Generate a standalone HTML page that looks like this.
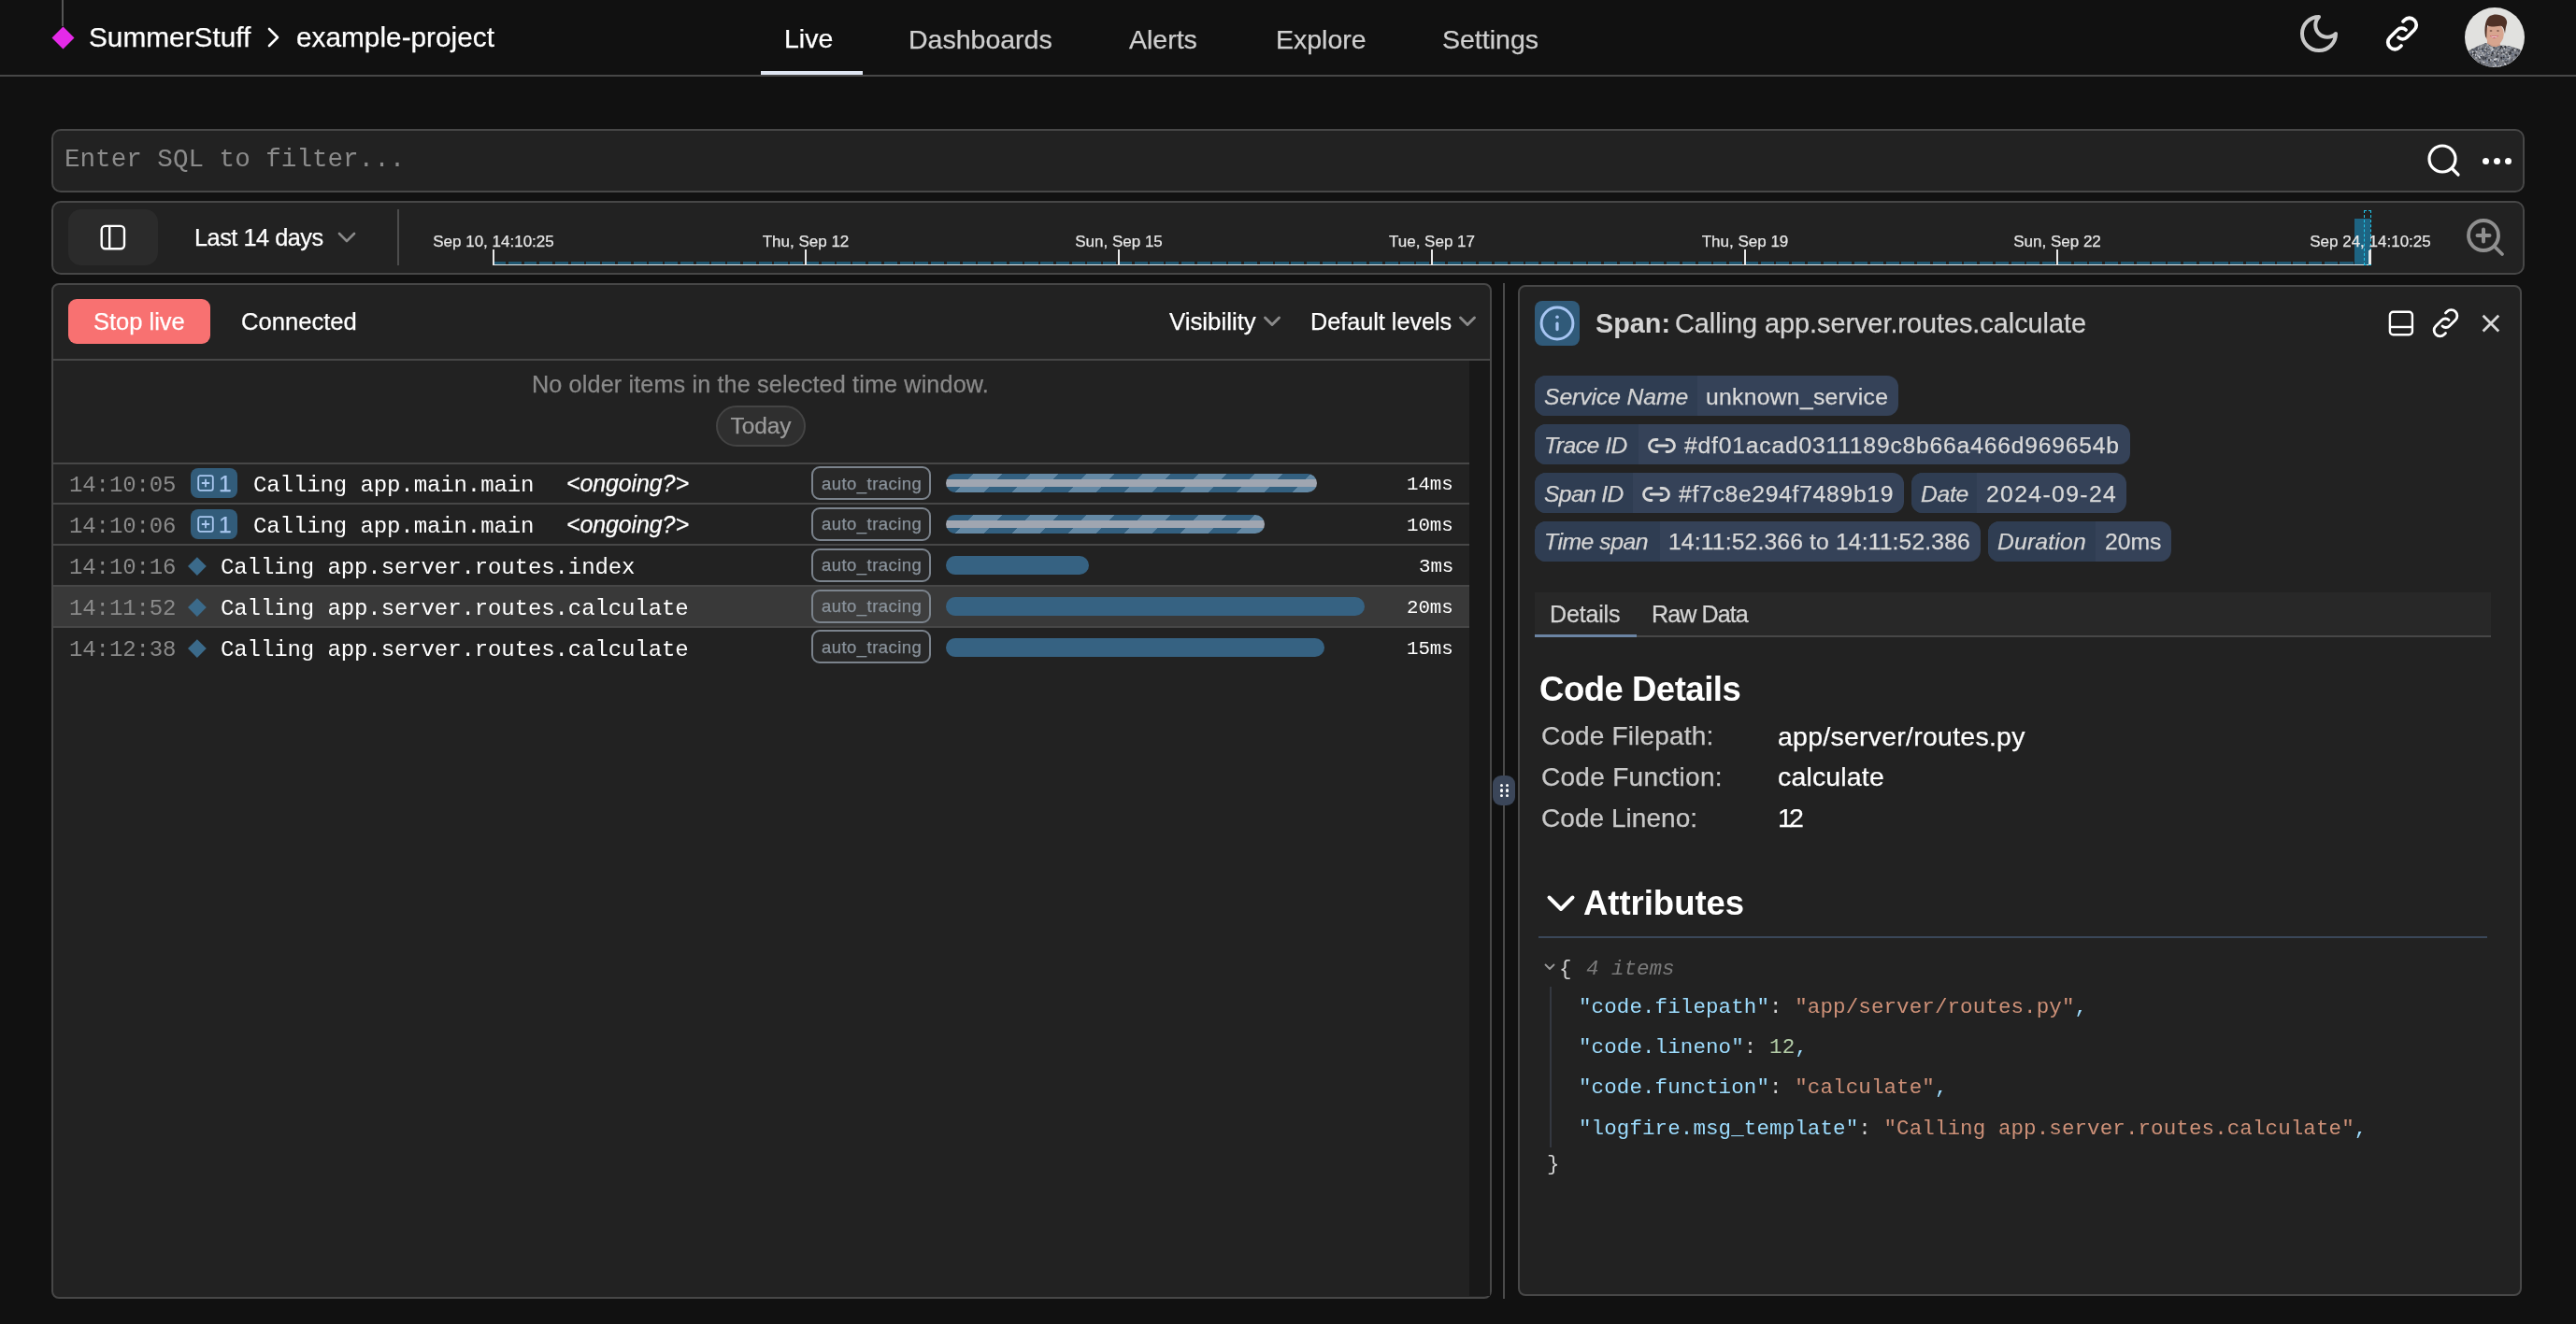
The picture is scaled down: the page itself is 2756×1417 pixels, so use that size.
<!DOCTYPE html>
<html><head><meta charset="utf-8"><title>Logfire - Live</title>
<style>
html,body{margin:0;padding:0;}
body{width:2756px;height:1417px;overflow:hidden;background:#111111;position:relative;font-family:"Liberation Sans", sans-serif;}
.t{position:absolute;white-space:nowrap;line-height:1;will-change:transform;}
.s{-webkit-text-stroke:0.25px currentColor;}
.r{position:absolute;}
</style></head><body>
<div class="r" style="left:66px;top:0px;width:2px;height:28px;background:#555"></div>
<div class="r" style="left:58.5px;top:31.5px;width:17px;height:17px;background:#e52ae8;transform:rotate(45deg)"></div>
<div class="t s" style="left:95px;top:25.07px;font-size:29.8px;color:#fff;">SummerStuff</div>
<svg class="r" style="left:284px;top:28px;" width="18" height="24" viewBox="0 0 18 24" fill="none"><path d="M4 3 L13 12 L4 21" stroke="#fff" stroke-width="2.6" stroke-linecap="round" stroke-linejoin="round"/></svg>
<div class="t s" style="left:317px;top:24.77px;font-size:29.8px;color:#fff;">example-project</div>
<div class="t s" style="left:839px;top:26.87px;font-size:28.5px;color:#fff;">Live</div>
<div class="r" style="left:814px;top:76px;width:109px;height:4px;background:#dfe6f2"></div>
<div class="t s" style="left:972px;top:27.67px;font-size:28.5px;color:#cfcfcf;">Dashboards</div>
<div class="t s" style="left:1208px;top:27.67px;font-size:28.5px;color:#cfcfcf;">Alerts</div>
<div class="t s" style="left:1365px;top:27.67px;font-size:28.5px;color:#cfcfcf;">Explore</div>
<div class="t s" style="left:1543px;top:27.67px;font-size:28.5px;color:#cfcfcf;">Settings</div>
<div class="r" style="left:0px;top:80px;width:2756px;height:2px;background:#474747"></div>
<svg class="r" style="left:2456.8px;top:11.9px;" width="48" height="48" viewBox="0 0 24 24" fill="none"><path d="M12 3a6 6 0 0 0 9 9 9 9 0 1 1-9-9Z" stroke="#c8c8c8" stroke-width="2" stroke-linejoin="round"/></svg>
<svg class="r" style="left:2548px;top:14px;" width="44" height="44" viewBox="0 0 44 44" fill="none"><path d="M18 26 C20.5 28.5 24.5 28.5 27 26 L35 18 C38 15 38 10.5 35 7.5 C32 4.5 27.5 4.5 24.5 7.5 L23 9" stroke="#fff" stroke-width="3.8" stroke-linecap="round"/><path d="M26 18 C23.5 15.5 19.5 15.5 17 18 L9 26 C6 29 6 33.5 9 36.5 C12 39.5 16.5 39.5 19.5 36.5 L21 35" stroke="#fff" stroke-width="3.8" stroke-linecap="round"/></svg>
<svg class="r" style="left:2637px;top:8px" width="64" height="64" viewBox="0 0 64 64">
<defs><clipPath id="av"><circle cx="32" cy="32" r="32"/></clipPath>
<clipPath id="shirt"><path d="M4 47 C9 43 17 40 23 38 C27 41 33 44 37 41 C41 40 50 41 59 45 L64 64 L0 64 Z"/></clipPath></defs>
<g clip-path="url(#av)"><rect width="64" height="64" fill="#e1e1df"/>
<path d="M24 33 L37 33 L38 41 C34 44 28 44 24 40 Z" fill="#cf9d88"/>
<ellipse cx="32" cy="28.5" rx="9.8" ry="12" fill="#d7a58f"/>
<path d="M22 31 C20.5 22 22 12 27 9 C31 6.5 38 7 42 10 C45 12.5 46 16 44.5 19 C43.8 21 43.5 24 43 28 C42.3 24 41.5 21.5 39.5 20 C37 19 33 20.5 29 20.5 C26.5 20.5 25 19.5 24.2 19 C23.7 22.5 23.3 27 23.3 33 Z" fill="#4f3126"/>
<path d="M26.8 30 Q31.5 35.5 36.2 30 Q31.5 31.5 26.8 30 Z" fill="#c8385a"/><path d="M28 30.6 Q31.5 31.8 35 30.6 L34.5 31.6 Q31.5 32.6 28.5 31.6 Z" fill="#f1e6e6"/><ellipse cx="28" cy="25" rx="1.4" ry="0.7" fill="#6d4b3e"/><ellipse cx="35.5" cy="25" rx="1.4" ry="0.7" fill="#6d4b3e"/>
<g clip-path="url(#shirt)"><rect x="0" y="36" width="64" height="28" fill="#7a7c82"/><rect x="21.0" y="40.4" width="1.0" height="1.0" fill="#2e3036"/><rect x="34.8" y="46.6" width="1.9" height="1.9" fill="#2e3036"/><rect x="14.0" y="38.5" width="1.0" height="1.0" fill="#5a6170"/><rect x="5.9" y="48.3" width="1.9" height="1.9" fill="#45484f"/><rect x="41.0" y="52.9" width="1.5" height="1.5" fill="#2e3036"/><rect x="25.8" y="64.3" width="1.5" height="1.5" fill="#2e3036"/><rect x="8.7" y="48.2" width="1.5" height="1.5" fill="#45484f"/><rect x="36.4" y="55.8" width="1.5" height="1.5" fill="#45484f"/><rect x="41.5" y="46.8" width="1.5" height="1.5" fill="#45484f"/><rect x="40.2" y="50.4" width="1.8" height="1.8" fill="#5a6170"/><rect x="30.3" y="62.8" width="1.2" height="1.2" fill="#d5d6da"/><rect x="51.6" y="56.3" width="1.0" height="1.0" fill="#8e9198"/><rect x="19.5" y="50.4" width="1.7" height="1.7" fill="#d5d6da"/><rect x="18.7" y="64.4" width="1.5" height="1.5" fill="#45484f"/><rect x="10.7" y="45.9" width="1.4" height="1.4" fill="#7d8595"/><rect x="62.5" y="38.3" width="1.3" height="1.3" fill="#d5d6da"/><rect x="22.8" y="50.4" width="1.0" height="1.0" fill="#7d8595"/><rect x="6.1" y="43.8" width="1.0" height="1.0" fill="#45484f"/><rect x="45.6" y="54.8" width="1.2" height="1.2" fill="#7d8595"/><rect x="25.1" y="55.4" width="1.9" height="1.9" fill="#2e3036"/><rect x="23.1" y="53.7" width="1.0" height="1.0" fill="#7d8595"/><rect x="49.9" y="39.8" width="1.3" height="1.3" fill="#8e9198"/><rect x="59.6" y="50.4" width="1.4" height="1.4" fill="#6b6e75"/><rect x="35.7" y="61.6" width="1.9" height="1.9" fill="#5a6170"/><rect x="18.1" y="48.0" width="1.7" height="1.7" fill="#d5d6da"/><rect x="24.7" y="42.7" width="1.1" height="1.1" fill="#45484f"/><rect x="15.1" y="42.8" width="1.8" height="1.8" fill="#7d8595"/><rect x="11.9" y="44.2" width="1.4" height="1.4" fill="#6b6e75"/><rect x="24.0" y="52.4" width="1.7" height="1.7" fill="#6b6e75"/><rect x="33.5" y="53.9" width="1.4" height="1.4" fill="#2e3036"/><rect x="56.6" y="63.6" width="1.3" height="1.3" fill="#5a6170"/><rect x="25.6" y="50.0" width="1.0" height="1.0" fill="#5a6170"/><rect x="4.4" y="42.1" width="1.0" height="1.0" fill="#6b6e75"/><rect x="39.0" y="39.0" width="1.5" height="1.5" fill="#6b6e75"/><rect x="61.7" y="53.8" width="1.9" height="1.9" fill="#45484f"/><rect x="39.9" y="40.3" width="2.0" height="2.0" fill="#b5b7bc"/><rect x="39.1" y="49.8" width="1.8" height="1.8" fill="#45484f"/><rect x="64.6" y="49.5" width="1.2" height="1.2" fill="#7d8595"/><rect x="9.4" y="57.7" width="1.4" height="1.4" fill="#b5b7bc"/><rect x="45.0" y="51.0" width="1.9" height="1.9" fill="#8e9198"/><rect x="34.3" y="40.3" width="1.7" height="1.7" fill="#2e3036"/><rect x="19.4" y="54.6" width="1.7" height="1.7" fill="#45484f"/><rect x="17.0" y="46.6" width="1.3" height="1.3" fill="#6b6e75"/><rect x="14.5" y="51.7" width="1.6" height="1.6" fill="#d5d6da"/><rect x="39.9" y="58.9" width="1.8" height="1.8" fill="#8e9198"/><rect x="53.2" y="57.5" width="1.1" height="1.1" fill="#8e9198"/><rect x="32.0" y="57.2" width="1.8" height="1.8" fill="#2e3036"/><rect x="30.7" y="41.6" width="1.4" height="1.4" fill="#d5d6da"/><rect x="60.9" y="64.7" width="1.0" height="1.0" fill="#d5d6da"/><rect x="6.6" y="49.6" width="1.1" height="1.1" fill="#d5d6da"/><rect x="40.6" y="62.1" width="1.4" height="1.4" fill="#2e3036"/><rect x="42.4" y="59.2" width="1.8" height="1.8" fill="#45484f"/><rect x="7.8" y="47.3" width="1.4" height="1.4" fill="#8e9198"/><rect x="11.6" y="58.9" width="1.0" height="1.0" fill="#d5d6da"/><rect x="61.5" y="56.9" width="1.3" height="1.3" fill="#7d8595"/><rect x="61.5" y="57.0" width="2.0" height="2.0" fill="#6b6e75"/><rect x="1.8" y="53.1" width="1.8" height="1.8" fill="#7d8595"/><rect x="9.5" y="60.0" width="1.6" height="1.6" fill="#7d8595"/><rect x="22.8" y="51.9" width="0.9" height="0.9" fill="#6b6e75"/><rect x="52.0" y="57.1" width="1.5" height="1.5" fill="#45484f"/><rect x="60.7" y="48.6" width="1.8" height="1.8" fill="#8e9198"/><rect x="13.7" y="43.3" width="1.5" height="1.5" fill="#b5b7bc"/><rect x="49.6" y="45.5" width="1.8" height="1.8" fill="#5a6170"/><rect x="4.0" y="57.5" width="1.6" height="1.6" fill="#7d8595"/><rect x="53.0" y="51.0" width="1.5" height="1.5" fill="#6b6e75"/><rect x="34.0" y="36.5" width="1.8" height="1.8" fill="#7d8595"/><rect x="39.6" y="58.5" width="1.1" height="1.1" fill="#6b6e75"/><rect x="30.8" y="57.0" width="1.3" height="1.3" fill="#2e3036"/><rect x="33.7" y="52.1" width="1.9" height="1.9" fill="#45484f"/><rect x="3.7" y="41.5" width="1.7" height="1.7" fill="#2e3036"/><rect x="33.0" y="52.3" width="1.4" height="1.4" fill="#45484f"/><rect x="39.8" y="50.7" width="1.7" height="1.7" fill="#8e9198"/><rect x="29.4" y="51.5" width="1.5" height="1.5" fill="#7d8595"/><rect x="16.1" y="51.2" width="1.9" height="1.9" fill="#b5b7bc"/><rect x="58.0" y="41.9" width="1.1" height="1.1" fill="#7d8595"/><rect x="7.9" y="48.8" width="1.6" height="1.6" fill="#45484f"/><rect x="27.8" y="42.2" width="1.8" height="1.8" fill="#b5b7bc"/><rect x="58.3" y="40.5" width="1.1" height="1.1" fill="#d5d6da"/><rect x="57.4" y="64.1" width="1.7" height="1.7" fill="#8e9198"/><rect x="6.1" y="61.7" width="2.0" height="2.0" fill="#6b6e75"/><rect x="54.1" y="40.7" width="2.0" height="2.0" fill="#5a6170"/><rect x="26.2" y="48.2" width="1.3" height="1.3" fill="#d5d6da"/><rect x="46.9" y="36.6" width="1.4" height="1.4" fill="#7d8595"/><rect x="1.2" y="45.6" width="1.5" height="1.5" fill="#b5b7bc"/><rect x="4.2" y="64.6" width="2.0" height="2.0" fill="#8e9198"/><rect x="6.8" y="43.7" width="1.9" height="1.9" fill="#2e3036"/><rect x="11.8" y="57.9" width="1.8" height="1.8" fill="#5a6170"/><rect x="43.9" y="63.4" width="1.1" height="1.1" fill="#5a6170"/><rect x="59.7" y="52.5" width="1.0" height="1.0" fill="#d5d6da"/><rect x="3.7" y="56.0" width="1.9" height="1.9" fill="#5a6170"/><rect x="17.5" y="36.5" width="1.8" height="1.8" fill="#45484f"/><rect x="5.4" y="60.8" width="1.2" height="1.2" fill="#45484f"/><rect x="7.9" y="36.3" width="1.9" height="1.9" fill="#5a6170"/><rect x="17.4" y="39.7" width="1.9" height="1.9" fill="#8e9198"/><rect x="63.0" y="43.6" width="1.1" height="1.1" fill="#6b6e75"/><rect x="20.3" y="44.8" width="1.2" height="1.2" fill="#8e9198"/><rect x="32.5" y="41.2" width="1.8" height="1.8" fill="#d5d6da"/><rect x="64.6" y="37.1" width="1.7" height="1.7" fill="#2e3036"/><rect x="35.8" y="41.5" width="1.2" height="1.2" fill="#7d8595"/><rect x="29.1" y="55.1" width="1.6" height="1.6" fill="#5a6170"/><rect x="35.5" y="61.8" width="1.7" height="1.7" fill="#b5b7bc"/><rect x="63.9" y="45.9" width="1.3" height="1.3" fill="#6b6e75"/><rect x="22.6" y="37.6" width="0.9" height="0.9" fill="#6b6e75"/><rect x="40.7" y="61.5" width="1.1" height="1.1" fill="#5a6170"/><rect x="5.5" y="60.4" width="1.6" height="1.6" fill="#b5b7bc"/><rect x="45.0" y="37.3" width="1.1" height="1.1" fill="#6b6e75"/><rect x="29.0" y="43.6" width="2.0" height="2.0" fill="#d5d6da"/><rect x="35.6" y="43.1" width="1.1" height="1.1" fill="#b5b7bc"/><rect x="11.9" y="45.7" width="1.4" height="1.4" fill="#45484f"/><rect x="32.7" y="41.8" width="1.0" height="1.0" fill="#2e3036"/><rect x="53.1" y="40.2" width="1.3" height="1.3" fill="#2e3036"/><rect x="19.5" y="54.3" width="1.5" height="1.5" fill="#45484f"/><rect x="34.4" y="57.8" width="1.7" height="1.7" fill="#5a6170"/><rect x="46.8" y="50.3" width="1.7" height="1.7" fill="#b5b7bc"/><rect x="41.8" y="37.3" width="1.7" height="1.7" fill="#5a6170"/><rect x="52.8" y="40.0" width="1.8" height="1.8" fill="#2e3036"/><rect x="38.0" y="61.9" width="1.0" height="1.0" fill="#8e9198"/><rect x="2.7" y="54.5" width="1.3" height="1.3" fill="#45484f"/><rect x="29.3" y="37.5" width="1.6" height="1.6" fill="#2e3036"/><rect x="44.2" y="50.2" width="1.4" height="1.4" fill="#2e3036"/><rect x="4.6" y="63.0" width="1.6" height="1.6" fill="#45484f"/><rect x="4.3" y="57.4" width="1.8" height="1.8" fill="#b5b7bc"/><rect x="55.0" y="42.8" width="1.2" height="1.2" fill="#8e9198"/><rect x="42.2" y="49.3" width="1.0" height="1.0" fill="#5a6170"/><rect x="59.2" y="44.3" width="1.6" height="1.6" fill="#2e3036"/><rect x="41.8" y="38.2" width="1.3" height="1.3" fill="#6b6e75"/><rect x="42.3" y="56.1" width="0.9" height="0.9" fill="#6b6e75"/><rect x="3.9" y="43.8" width="1.7" height="1.7" fill="#45484f"/><rect x="43.9" y="44.4" width="1.4" height="1.4" fill="#b5b7bc"/><rect x="30.3" y="39.4" width="1.2" height="1.2" fill="#8e9198"/><rect x="5.6" y="49.7" width="1.4" height="1.4" fill="#b5b7bc"/><rect x="53.3" y="64.1" width="2.0" height="2.0" fill="#7d8595"/><rect x="25.1" y="62.6" width="1.0" height="1.0" fill="#8e9198"/><rect x="5.9" y="57.7" width="1.9" height="1.9" fill="#b5b7bc"/><rect x="8.6" y="59.8" width="1.9" height="1.9" fill="#b5b7bc"/><rect x="45.7" y="42.7" width="1.3" height="1.3" fill="#7d8595"/><rect x="10.3" y="63.5" width="1.3" height="1.3" fill="#7d8595"/><rect x="47.3" y="48.1" width="1.2" height="1.2" fill="#5a6170"/><rect x="54.6" y="36.1" width="1.8" height="1.8" fill="#d5d6da"/><rect x="7.8" y="62.9" width="1.9" height="1.9" fill="#2e3036"/><rect x="18.8" y="46.8" width="1.3" height="1.3" fill="#5a6170"/><rect x="56.5" y="38.2" width="1.7" height="1.7" fill="#5a6170"/><rect x="55.5" y="44.1" width="1.8" height="1.8" fill="#2e3036"/><rect x="18.6" y="63.1" width="2.0" height="2.0" fill="#8e9198"/><rect x="28.4" y="45.2" width="1.8" height="1.8" fill="#d5d6da"/><rect x="27.8" y="36.8" width="1.9" height="1.9" fill="#5a6170"/><rect x="61.1" y="51.9" width="1.0" height="1.0" fill="#45484f"/><rect x="47.6" y="49.1" width="1.6" height="1.6" fill="#6b6e75"/><rect x="18.6" y="37.4" width="1.1" height="1.1" fill="#6b6e75"/><rect x="27.0" y="44.2" width="1.7" height="1.7" fill="#b5b7bc"/><rect x="63.5" y="43.5" width="1.2" height="1.2" fill="#8e9198"/><rect x="36.2" y="47.4" width="1.6" height="1.6" fill="#6b6e75"/><rect x="4.9" y="50.5" width="1.5" height="1.5" fill="#7d8595"/><rect x="29.4" y="45.7" width="1.4" height="1.4" fill="#7d8595"/><rect x="35.6" y="43.1" width="1.3" height="1.3" fill="#6b6e75"/><rect x="5.9" y="42.9" width="1.8" height="1.8" fill="#b5b7bc"/><rect x="13.1" y="36.6" width="1.3" height="1.3" fill="#5a6170"/><rect x="48.5" y="42.1" width="1.3" height="1.3" fill="#b5b7bc"/><rect x="4.0" y="44.0" width="1.0" height="1.0" fill="#d5d6da"/><rect x="32.7" y="54.3" width="1.0" height="1.0" fill="#8e9198"/><rect x="58.3" y="47.2" width="1.4" height="1.4" fill="#7d8595"/><rect x="20.3" y="59.6" width="1.0" height="1.0" fill="#2e3036"/><rect x="27.6" y="58.1" width="2.0" height="2.0" fill="#7d8595"/><rect x="31.8" y="38.1" width="2.0" height="2.0" fill="#7d8595"/><rect x="16.2" y="39.2" width="1.1" height="1.1" fill="#6b6e75"/><rect x="63.2" y="39.2" width="1.0" height="1.0" fill="#7d8595"/><rect x="50.5" y="36.0" width="1.2" height="1.2" fill="#6b6e75"/><rect x="59.8" y="54.7" width="2.0" height="2.0" fill="#b5b7bc"/><rect x="40.7" y="51.3" width="1.7" height="1.7" fill="#5a6170"/><rect x="7.3" y="38.0" width="1.3" height="1.3" fill="#8e9198"/><rect x="14.5" y="53.4" width="1.5" height="1.5" fill="#2e3036"/><rect x="64.8" y="44.1" width="1.6" height="1.6" fill="#d5d6da"/><rect x="57.4" y="49.8" width="1.5" height="1.5" fill="#8e9198"/><rect x="1.9" y="47.9" width="1.0" height="1.0" fill="#b5b7bc"/><rect x="12.6" y="61.7" width="1.0" height="1.0" fill="#5a6170"/><rect x="14.8" y="48.3" width="1.1" height="1.1" fill="#d5d6da"/><rect x="2.2" y="45.8" width="1.3" height="1.3" fill="#5a6170"/><rect x="25.8" y="36.2" width="1.7" height="1.7" fill="#b5b7bc"/><rect x="32.8" y="42.0" width="1.2" height="1.2" fill="#8e9198"/><rect x="53.3" y="42.7" width="1.2" height="1.2" fill="#8e9198"/><rect x="57.8" y="39.2" width="1.6" height="1.6" fill="#7d8595"/><rect x="58.3" y="50.1" width="1.9" height="1.9" fill="#2e3036"/><rect x="9.5" y="47.4" width="0.9" height="0.9" fill="#8e9198"/><rect x="38.7" y="48.0" width="1.1" height="1.1" fill="#2e3036"/><rect x="29.2" y="56.6" width="1.7" height="1.7" fill="#d5d6da"/><rect x="64.8" y="63.0" width="1.1" height="1.1" fill="#d5d6da"/><rect x="42.4" y="51.2" width="0.9" height="0.9" fill="#7d8595"/><rect x="43.2" y="47.0" width="2.0" height="2.0" fill="#d5d6da"/><rect x="28.8" y="39.2" width="1.2" height="1.2" fill="#45484f"/><rect x="22.8" y="63.7" width="1.5" height="1.5" fill="#45484f"/><rect x="49.3" y="47.0" width="1.8" height="1.8" fill="#b5b7bc"/><rect x="28.1" y="37.4" width="1.1" height="1.1" fill="#7d8595"/><rect x="35.2" y="48.9" width="1.3" height="1.3" fill="#d5d6da"/><rect x="58.3" y="36.9" width="1.2" height="1.2" fill="#5a6170"/><rect x="40.7" y="47.7" width="0.9" height="0.9" fill="#5a6170"/><rect x="4.1" y="62.7" width="1.1" height="1.1" fill="#b5b7bc"/><rect x="4.1" y="53.6" width="1.2" height="1.2" fill="#d5d6da"/><rect x="62.2" y="53.9" width="1.7" height="1.7" fill="#b5b7bc"/><rect x="44.8" y="62.8" width="0.9" height="0.9" fill="#b5b7bc"/><rect x="49.1" y="62.6" width="0.9" height="0.9" fill="#45484f"/><rect x="15.2" y="49.8" width="1.9" height="1.9" fill="#7d8595"/><rect x="25.1" y="43.3" width="1.8" height="1.8" fill="#5a6170"/><rect x="8.6" y="50.4" width="1.8" height="1.8" fill="#2e3036"/><rect x="48.0" y="59.9" width="1.6" height="1.6" fill="#6b6e75"/><rect x="21.3" y="45.3" width="1.8" height="1.8" fill="#d5d6da"/><rect x="38.7" y="50.8" width="1.7" height="1.7" fill="#5a6170"/><rect x="16.1" y="37.9" width="1.4" height="1.4" fill="#2e3036"/><rect x="35.4" y="40.7" width="1.9" height="1.9" fill="#5a6170"/><rect x="64.2" y="43.7" width="1.1" height="1.1" fill="#45484f"/><rect x="27.4" y="64.7" width="1.1" height="1.1" fill="#7d8595"/><rect x="8.6" y="49.4" width="1.7" height="1.7" fill="#8e9198"/><rect x="55.1" y="55.3" width="1.8" height="1.8" fill="#45484f"/><rect x="19.1" y="44.1" width="1.3" height="1.3" fill="#b5b7bc"/><rect x="48.0" y="41.8" width="1.1" height="1.1" fill="#8e9198"/><rect x="15.3" y="44.2" width="1.3" height="1.3" fill="#8e9198"/><rect x="25.7" y="64.8" width="1.6" height="1.6" fill="#8e9198"/><rect x="6.5" y="49.5" width="1.0" height="1.0" fill="#2e3036"/><rect x="30.9" y="59.8" width="1.9" height="1.9" fill="#7d8595"/><rect x="2.6" y="44.5" width="1.0" height="1.0" fill="#45484f"/><rect x="39.0" y="60.0" width="1.9" height="1.9" fill="#8e9198"/><rect x="24.2" y="61.1" width="1.6" height="1.6" fill="#7d8595"/><rect x="50.4" y="55.3" width="1.0" height="1.0" fill="#2e3036"/><rect x="38.7" y="54.0" width="0.9" height="0.9" fill="#8e9198"/><rect x="22.1" y="37.3" width="0.9" height="0.9" fill="#b5b7bc"/><rect x="47.6" y="62.5" width="1.8" height="1.8" fill="#2e3036"/><rect x="26.6" y="46.8" width="1.0" height="1.0" fill="#b5b7bc"/><rect x="2.0" y="50.4" width="1.0" height="1.0" fill="#7d8595"/><rect x="6.6" y="47.5" width="1.6" height="1.6" fill="#6b6e75"/><rect x="5.9" y="40.7" width="1.4" height="1.4" fill="#b5b7bc"/><rect x="18.4" y="44.9" width="1.2" height="1.2" fill="#2e3036"/><rect x="36.8" y="46.4" width="0.9" height="0.9" fill="#5a6170"/><rect x="49.8" y="59.3" width="1.3" height="1.3" fill="#8e9198"/><rect x="26.3" y="63.3" width="1.9" height="1.9" fill="#5a6170"/><rect x="27.5" y="59.8" width="1.5" height="1.5" fill="#5a6170"/><rect x="23.7" y="58.4" width="0.9" height="0.9" fill="#6b6e75"/><rect x="35.9" y="54.6" width="1.0" height="1.0" fill="#5a6170"/><rect x="40.4" y="46.8" width="1.1" height="1.1" fill="#6b6e75"/><rect x="18.4" y="51.1" width="1.0" height="1.0" fill="#45484f"/><rect x="31.9" y="59.3" width="1.2" height="1.2" fill="#8e9198"/><rect x="54.4" y="37.3" width="1.2" height="1.2" fill="#7d8595"/><rect x="39.5" y="54.5" width="1.9" height="1.9" fill="#45484f"/><rect x="40.3" y="59.9" width="1.6" height="1.6" fill="#6b6e75"/><rect x="55.7" y="54.0" width="1.8" height="1.8" fill="#8e9198"/><rect x="11.9" y="42.3" width="1.9" height="1.9" fill="#5a6170"/><rect x="10.2" y="46.4" width="1.2" height="1.2" fill="#6b6e75"/><rect x="47.1" y="62.0" width="1.9" height="1.9" fill="#2e3036"/><rect x="54.8" y="55.5" width="1.0" height="1.0" fill="#d5d6da"/><rect x="39.0" y="52.0" width="1.6" height="1.6" fill="#b5b7bc"/><rect x="20.0" y="43.2" width="1.6" height="1.6" fill="#5a6170"/><rect x="29.0" y="48.7" width="0.9" height="0.9" fill="#2e3036"/><rect x="64.1" y="49.5" width="1.7" height="1.7" fill="#7d8595"/><rect x="50.7" y="49.3" width="1.8" height="1.8" fill="#6b6e75"/><rect x="26.0" y="37.9" width="1.4" height="1.4" fill="#d5d6da"/><rect x="6.0" y="48.8" width="0.9" height="0.9" fill="#2e3036"/><rect x="8.5" y="62.7" width="1.8" height="1.8" fill="#d5d6da"/><rect x="33.2" y="37.6" width="1.6" height="1.6" fill="#5a6170"/><rect x="51.0" y="36.7" width="2.0" height="2.0" fill="#45484f"/><rect x="47.6" y="59.6" width="1.0" height="1.0" fill="#8e9198"/><rect x="57.6" y="44.3" width="1.7" height="1.7" fill="#6b6e75"/><rect x="46.9" y="42.4" width="1.6" height="1.6" fill="#d5d6da"/><rect x="16.4" y="45.4" width="1.9" height="1.9" fill="#b5b7bc"/><rect x="29.7" y="43.4" width="1.1" height="1.1" fill="#7d8595"/><rect x="17.1" y="50.7" width="1.3" height="1.3" fill="#d5d6da"/><rect x="12.9" y="47.7" width="1.6" height="1.6" fill="#b5b7bc"/><rect x="58.2" y="40.9" width="1.0" height="1.0" fill="#b5b7bc"/><rect x="34.5" y="54.5" width="2.0" height="2.0" fill="#d5d6da"/><rect x="29.4" y="51.1" width="1.2" height="1.2" fill="#45484f"/><rect x="34.8" y="60.8" width="1.2" height="1.2" fill="#d5d6da"/><rect x="64.4" y="52.7" width="1.3" height="1.3" fill="#d5d6da"/><rect x="5.3" y="42.7" width="1.2" height="1.2" fill="#2e3036"/><rect x="33.5" y="45.0" width="1.7" height="1.7" fill="#d5d6da"/><rect x="48.6" y="42.4" width="1.6" height="1.6" fill="#b5b7bc"/><rect x="28.1" y="50.9" width="1.0" height="1.0" fill="#2e3036"/><rect x="14.8" y="54.9" width="1.0" height="1.0" fill="#2e3036"/><rect x="36.9" y="44.8" width="1.5" height="1.5" fill="#d5d6da"/><rect x="26.9" y="44.7" width="1.1" height="1.1" fill="#6b6e75"/><rect x="40.6" y="49.8" width="0.9" height="0.9" fill="#6b6e75"/><rect x="52.1" y="56.5" width="1.0" height="1.0" fill="#7d8595"/><rect x="41.5" y="61.3" width="1.3" height="1.3" fill="#b5b7bc"/><rect x="17.2" y="36.3" width="1.6" height="1.6" fill="#d5d6da"/><rect x="37.6" y="53.5" width="1.2" height="1.2" fill="#7d8595"/><rect x="58.7" y="37.3" width="1.3" height="1.3" fill="#2e3036"/><rect x="15.4" y="37.7" width="0.9" height="0.9" fill="#45484f"/><rect x="35.8" y="63.3" width="1.4" height="1.4" fill="#6b6e75"/><rect x="33.7" y="54.6" width="1.8" height="1.8" fill="#5a6170"/><rect x="11.4" y="45.0" width="1.6" height="1.6" fill="#b5b7bc"/><rect x="64.6" y="57.0" width="1.7" height="1.7" fill="#7d8595"/><rect x="0.4" y="60.5" width="1.0" height="1.0" fill="#7d8595"/><rect x="42.6" y="41.1" width="1.2" height="1.2" fill="#45484f"/><rect x="41.9" y="39.6" width="1.7" height="1.7" fill="#b5b7bc"/><rect x="17.3" y="52.1" width="1.7" height="1.7" fill="#5a6170"/><rect x="59.6" y="64.2" width="1.6" height="1.6" fill="#b5b7bc"/><rect x="62.7" y="42.3" width="1.1" height="1.1" fill="#2e3036"/><rect x="58.8" y="60.4" width="1.9" height="1.9" fill="#8e9198"/><rect x="48.5" y="45.5" width="1.3" height="1.3" fill="#5a6170"/><rect x="15.5" y="62.3" width="1.4" height="1.4" fill="#7d8595"/><rect x="34.5" y="36.2" width="1.4" height="1.4" fill="#2e3036"/><rect x="47.1" y="52.5" width="1.8" height="1.8" fill="#b5b7bc"/><rect x="25.5" y="53.0" width="1.1" height="1.1" fill="#6b6e75"/><rect x="1.7" y="39.1" width="1.3" height="1.3" fill="#6b6e75"/><rect x="9.2" y="36.8" width="1.1" height="1.1" fill="#2e3036"/><rect x="41.8" y="37.2" width="1.7" height="1.7" fill="#45484f"/><rect x="4.3" y="53.1" width="1.1" height="1.1" fill="#d5d6da"/><rect x="62.0" y="51.5" width="1.9" height="1.9" fill="#45484f"/><rect x="49.1" y="56.6" width="1.0" height="1.0" fill="#5a6170"/><rect x="13.4" y="39.2" width="1.9" height="1.9" fill="#2e3036"/><rect x="59.2" y="57.9" width="1.8" height="1.8" fill="#45484f"/><rect x="41.0" y="44.3" width="1.0" height="1.0" fill="#45484f"/><rect x="51.5" y="54.7" width="1.3" height="1.3" fill="#b5b7bc"/><rect x="27.5" y="36.6" width="1.9" height="1.9" fill="#b5b7bc"/><rect x="3.1" y="58.0" width="1.7" height="1.7" fill="#d5d6da"/><rect x="39.1" y="49.8" width="1.6" height="1.6" fill="#b5b7bc"/><rect x="2.0" y="48.0" width="1.5" height="1.5" fill="#5a6170"/><rect x="6.4" y="49.6" width="1.5" height="1.5" fill="#2e3036"/><rect x="14.1" y="61.0" width="1.5" height="1.5" fill="#45484f"/><rect x="18.7" y="48.6" width="1.2" height="1.2" fill="#8e9198"/><rect x="48.8" y="37.6" width="1.4" height="1.4" fill="#d5d6da"/><rect x="31.9" y="59.1" width="2.0" height="2.0" fill="#6b6e75"/><rect x="38.5" y="63.8" width="1.5" height="1.5" fill="#b5b7bc"/><rect x="10.3" y="59.6" width="1.4" height="1.4" fill="#8e9198"/><rect x="7.1" y="54.5" width="1.4" height="1.4" fill="#45484f"/><rect x="64.4" y="52.3" width="1.6" height="1.6" fill="#45484f"/><rect x="23.1" y="47.6" width="1.9" height="1.9" fill="#5a6170"/><rect x="48.4" y="48.2" width="1.3" height="1.3" fill="#2e3036"/><rect x="19.7" y="48.4" width="1.3" height="1.3" fill="#6b6e75"/><rect x="57.5" y="42.8" width="1.0" height="1.0" fill="#7d8595"/><rect x="38.6" y="56.0" width="1.3" height="1.3" fill="#2e3036"/><rect x="21.2" y="40.5" width="1.6" height="1.6" fill="#7d8595"/><rect x="48.2" y="40.9" width="1.7" height="1.7" fill="#7d8595"/><rect x="16.7" y="42.7" width="1.4" height="1.4" fill="#d5d6da"/><rect x="57.5" y="42.9" width="1.2" height="1.2" fill="#8e9198"/><rect x="49.1" y="60.0" width="1.7" height="1.7" fill="#6b6e75"/><rect x="63.4" y="57.0" width="1.1" height="1.1" fill="#d5d6da"/><rect x="21.3" y="41.5" width="1.1" height="1.1" fill="#45484f"/><rect x="42.8" y="41.7" width="2.0" height="2.0" fill="#6b6e75"/><rect x="51.7" y="57.3" width="1.2" height="1.2" fill="#5a6170"/><rect x="7.1" y="62.4" width="1.1" height="1.1" fill="#b5b7bc"/><rect x="25.2" y="37.0" width="1.8" height="1.8" fill="#5a6170"/><rect x="28.4" y="42.5" width="1.4" height="1.4" fill="#b5b7bc"/><rect x="9.2" y="53.5" width="0.9" height="0.9" fill="#5a6170"/><rect x="15.7" y="60.7" width="1.8" height="1.8" fill="#5a6170"/><rect x="43.4" y="54.9" width="1.6" height="1.6" fill="#8e9198"/><rect x="41.7" y="49.2" width="1.2" height="1.2" fill="#d5d6da"/><rect x="45.5" y="61.9" width="1.8" height="1.8" fill="#8e9198"/><rect x="46.4" y="54.3" width="1.8" height="1.8" fill="#b5b7bc"/><rect x="31.4" y="36.6" width="1.5" height="1.5" fill="#5a6170"/><rect x="43.0" y="61.3" width="1.8" height="1.8" fill="#d5d6da"/><rect x="25.3" y="50.2" width="0.9" height="0.9" fill="#45484f"/><rect x="35.3" y="40.7" width="1.5" height="1.5" fill="#8e9198"/><rect x="6.6" y="52.7" width="1.7" height="1.7" fill="#8e9198"/><rect x="33.3" y="54.5" width="1.5" height="1.5" fill="#d5d6da"/><rect x="26.7" y="63.5" width="2.0" height="2.0" fill="#8e9198"/><rect x="11.9" y="50.9" width="1.7" height="1.7" fill="#45484f"/><rect x="39.9" y="54.5" width="1.2" height="1.2" fill="#b5b7bc"/><rect x="26.0" y="36.4" width="1.9" height="1.9" fill="#5a6170"/><rect x="40.9" y="55.6" width="1.0" height="1.0" fill="#b5b7bc"/><rect x="19.7" y="47.6" width="2.0" height="2.0" fill="#8e9198"/><rect x="62.5" y="49.4" width="1.0" height="1.0" fill="#6b6e75"/><rect x="50.5" y="59.5" width="1.4" height="1.4" fill="#8e9198"/><rect x="36.5" y="42.6" width="1.3" height="1.3" fill="#6b6e75"/><rect x="41.5" y="59.7" width="1.4" height="1.4" fill="#5a6170"/><rect x="19.1" y="51.9" width="1.8" height="1.8" fill="#6b6e75"/><rect x="30.5" y="58.7" width="1.2" height="1.2" fill="#8e9198"/><rect x="24.4" y="43.4" width="1.6" height="1.6" fill="#5a6170"/><rect x="31.3" y="59.4" width="1.3" height="1.3" fill="#b5b7bc"/><rect x="42.5" y="45.3" width="1.4" height="1.4" fill="#7d8595"/><rect x="41.4" y="55.1" width="1.1" height="1.1" fill="#d5d6da"/><rect x="19.7" y="47.2" width="1.8" height="1.8" fill="#45484f"/><rect x="58.9" y="58.7" width="1.5" height="1.5" fill="#6b6e75"/><rect x="22.4" y="52.9" width="1.1" height="1.1" fill="#2e3036"/><rect x="4.7" y="44.5" width="1.5" height="1.5" fill="#45484f"/><rect x="55.5" y="41.4" width="1.3" height="1.3" fill="#7d8595"/><rect x="9.9" y="62.2" width="1.6" height="1.6" fill="#6b6e75"/><rect x="44.7" y="64.3" width="1.6" height="1.6" fill="#45484f"/><rect x="58.1" y="58.9" width="1.1" height="1.1" fill="#b5b7bc"/><rect x="45.0" y="51.4" width="1.6" height="1.6" fill="#7d8595"/><rect x="7.6" y="39.4" width="1.2" height="1.2" fill="#5a6170"/><rect x="9.1" y="50.3" width="1.4" height="1.4" fill="#2e3036"/><rect x="58.9" y="56.3" width="1.4" height="1.4" fill="#8e9198"/><rect x="35.1" y="61.0" width="1.1" height="1.1" fill="#2e3036"/><rect x="20.8" y="56.2" width="1.6" height="1.6" fill="#7d8595"/><rect x="54.6" y="46.9" width="2.0" height="2.0" fill="#5a6170"/><rect x="43.9" y="41.2" width="1.6" height="1.6" fill="#d5d6da"/><rect x="1.9" y="53.7" width="1.8" height="1.8" fill="#d5d6da"/><rect x="6.1" y="50.0" width="0.9" height="0.9" fill="#6b6e75"/><rect x="46.7" y="54.1" width="1.0" height="1.0" fill="#d5d6da"/><rect x="42.8" y="45.9" width="1.2" height="1.2" fill="#8e9198"/><rect x="22.2" y="43.3" width="1.8" height="1.8" fill="#2e3036"/><rect x="19.0" y="60.0" width="1.3" height="1.3" fill="#5a6170"/><rect x="64.0" y="61.3" width="2.0" height="2.0" fill="#d5d6da"/><rect x="42.5" y="59.0" width="1.1" height="1.1" fill="#d5d6da"/><rect x="46.4" y="39.7" width="1.8" height="1.8" fill="#45484f"/><rect x="2.6" y="57.0" width="1.5" height="1.5" fill="#5a6170"/><rect x="3.2" y="44.7" width="1.0" height="1.0" fill="#2e3036"/><rect x="53.4" y="49.8" width="1.8" height="1.8" fill="#2e3036"/><rect x="59.1" y="53.7" width="1.6" height="1.6" fill="#6b6e75"/><rect x="45.3" y="53.3" width="1.1" height="1.1" fill="#45484f"/><rect x="43.4" y="49.3" width="1.0" height="1.0" fill="#6b6e75"/><rect x="11.8" y="37.1" width="1.9" height="1.9" fill="#45484f"/><rect x="42.6" y="46.7" width="1.8" height="1.8" fill="#6b6e75"/><rect x="36.5" y="43.5" width="1.1" height="1.1" fill="#b5b7bc"/><rect x="2.2" y="36.6" width="1.4" height="1.4" fill="#2e3036"/><rect x="33.9" y="59.9" width="1.5" height="1.5" fill="#5a6170"/><rect x="59.7" y="48.9" width="1.6" height="1.6" fill="#2e3036"/><rect x="38.6" y="64.8" width="1.4" height="1.4" fill="#6b6e75"/><rect x="26.8" y="39.0" width="1.1" height="1.1" fill="#7d8595"/><rect x="9.9" y="36.5" width="0.9" height="0.9" fill="#2e3036"/><rect x="43.5" y="64.6" width="1.1" height="1.1" fill="#45484f"/><rect x="7.9" y="49.7" width="1.7" height="1.7" fill="#b5b7bc"/><rect x="15.7" y="57.3" width="1.9" height="1.9" fill="#6b6e75"/><rect x="23.8" y="57.7" width="1.7" height="1.7" fill="#6b6e75"/><rect x="5.5" y="54.2" width="1.4" height="1.4" fill="#7d8595"/><rect x="60.6" y="43.4" width="1.7" height="1.7" fill="#2e3036"/><rect x="0.7" y="36.4" width="1.3" height="1.3" fill="#45484f"/><rect x="20.3" y="53.4" width="1.6" height="1.6" fill="#7d8595"/><rect x="20.6" y="63.5" width="1.4" height="1.4" fill="#7d8595"/><rect x="10.8" y="64.0" width="1.3" height="1.3" fill="#45484f"/><rect x="41.9" y="54.3" width="1.4" height="1.4" fill="#5a6170"/><rect x="50.6" y="49.1" width="1.8" height="1.8" fill="#b5b7bc"/><rect x="36.8" y="44.5" width="1.6" height="1.6" fill="#2e3036"/><rect x="42.3" y="59.3" width="1.9" height="1.9" fill="#d5d6da"/><rect x="47.2" y="36.4" width="1.6" height="1.6" fill="#6b6e75"/><rect x="20.1" y="48.4" width="1.3" height="1.3" fill="#8e9198"/><rect x="44.5" y="53.5" width="1.8" height="1.8" fill="#8e9198"/><rect x="18.4" y="36.0" width="1.2" height="1.2" fill="#b5b7bc"/><rect x="10.2" y="62.7" width="1.2" height="1.2" fill="#2e3036"/><rect x="9.1" y="61.8" width="1.2" height="1.2" fill="#6b6e75"/><rect x="55.3" y="59.4" width="1.3" height="1.3" fill="#7d8595"/><rect x="5.5" y="52.1" width="1.1" height="1.1" fill="#5a6170"/><rect x="48.8" y="63.0" width="1.2" height="1.2" fill="#8e9198"/><rect x="3.7" y="47.5" width="1.9" height="1.9" fill="#8e9198"/><rect x="38.1" y="36.3" width="1.4" height="1.4" fill="#5a6170"/><rect x="5.7" y="59.4" width="1.2" height="1.2" fill="#45484f"/><rect x="37.7" y="62.0" width="1.4" height="1.4" fill="#d5d6da"/><rect x="38.3" y="41.5" width="1.0" height="1.0" fill="#8e9198"/><rect x="52.4" y="44.4" width="1.3" height="1.3" fill="#d5d6da"/><rect x="33.6" y="40.3" width="1.9" height="1.9" fill="#2e3036"/><rect x="32.1" y="61.1" width="1.6" height="1.6" fill="#d5d6da"/><rect x="51.2" y="40.5" width="1.3" height="1.3" fill="#2e3036"/><rect x="33.8" y="36.6" width="1.1" height="1.1" fill="#2e3036"/><rect x="56.6" y="52.4" width="1.2" height="1.2" fill="#8e9198"/><rect x="50.6" y="48.4" width="1.7" height="1.7" fill="#7d8595"/><rect x="53.2" y="63.9" width="1.8" height="1.8" fill="#b5b7bc"/><rect x="22.0" y="64.8" width="1.0" height="1.0" fill="#5a6170"/><rect x="3.3" y="52.2" width="1.4" height="1.4" fill="#7d8595"/><rect x="55.0" y="61.9" width="1.9" height="1.9" fill="#5a6170"/><rect x="45.9" y="38.6" width="1.5" height="1.5" fill="#d5d6da"/><rect x="41.6" y="63.7" width="1.1" height="1.1" fill="#5a6170"/><rect x="55.2" y="46.8" width="2.0" height="2.0" fill="#8e9198"/><rect x="14.4" y="37.1" width="1.9" height="1.9" fill="#b5b7bc"/><rect x="3.9" y="52.0" width="1.8" height="1.8" fill="#2e3036"/><rect x="3.1" y="58.8" width="1.0" height="1.0" fill="#7d8595"/><rect x="9.4" y="57.9" width="1.6" height="1.6" fill="#8e9198"/><rect x="19.4" y="53.2" width="1.4" height="1.4" fill="#45484f"/><rect x="24.2" y="47.3" width="1.4" height="1.4" fill="#d5d6da"/><rect x="11.0" y="42.9" width="1.9" height="1.9" fill="#6b6e75"/><rect x="58.0" y="49.6" width="1.8" height="1.8" fill="#8e9198"/><rect x="10.2" y="60.2" width="1.9" height="1.9" fill="#45484f"/><rect x="56.3" y="61.8" width="1.8" height="1.8" fill="#6b6e75"/><rect x="62.3" y="62.9" width="1.8" height="1.8" fill="#5a6170"/><rect x="40.8" y="49.1" width="1.3" height="1.3" fill="#d5d6da"/><rect x="15.2" y="39.4" width="1.1" height="1.1" fill="#d5d6da"/><rect x="14.4" y="37.6" width="1.5" height="1.5" fill="#7d8595"/><rect x="9.4" y="61.3" width="1.4" height="1.4" fill="#b5b7bc"/><rect x="16.0" y="36.7" width="1.3" height="1.3" fill="#b5b7bc"/><rect x="10.9" y="50.2" width="1.4" height="1.4" fill="#d5d6da"/><rect x="31.4" y="40.4" width="1.6" height="1.6" fill="#2e3036"/><rect x="51.2" y="62.8" width="1.8" height="1.8" fill="#7d8595"/><rect x="7.7" y="57.9" width="1.4" height="1.4" fill="#d5d6da"/><rect x="17.0" y="42.9" width="1.0" height="1.0" fill="#8e9198"/><rect x="18.8" y="62.0" width="1.8" height="1.8" fill="#2e3036"/><rect x="63.6" y="40.2" width="1.4" height="1.4" fill="#2e3036"/><rect x="33.0" y="50.8" width="0.9" height="0.9" fill="#7d8595"/><rect x="54.1" y="51.3" width="1.3" height="1.3" fill="#6b6e75"/><rect x="2.6" y="47.9" width="1.5" height="1.5" fill="#b5b7bc"/><rect x="9.0" y="41.2" width="1.7" height="1.7" fill="#8e9198"/><rect x="12.8" y="38.3" width="1.9" height="1.9" fill="#45484f"/><rect x="47.5" y="58.1" width="1.1" height="1.1" fill="#6b6e75"/><rect x="39.8" y="56.5" width="1.5" height="1.5" fill="#8e9198"/><rect x="13.1" y="37.9" width="1.8" height="1.8" fill="#5a6170"/><rect x="59.6" y="51.0" width="1.3" height="1.3" fill="#d5d6da"/><rect x="54.7" y="61.1" width="1.0" height="1.0" fill="#7d8595"/><rect x="26.6" y="58.1" width="1.9" height="1.9" fill="#6b6e75"/><rect x="17.3" y="41.4" width="0.9" height="0.9" fill="#d5d6da"/><rect x="45.6" y="52.7" width="1.3" height="1.3" fill="#2e3036"/><rect x="60.6" y="64.1" width="1.0" height="1.0" fill="#45484f"/><rect x="46.4" y="59.7" width="1.8" height="1.8" fill="#d5d6da"/><rect x="56.4" y="52.7" width="1.2" height="1.2" fill="#2e3036"/><rect x="7.0" y="57.2" width="1.5" height="1.5" fill="#7d8595"/><rect x="34.5" y="51.6" width="1.2" height="1.2" fill="#2e3036"/><rect x="5.8" y="54.0" width="1.0" height="1.0" fill="#6b6e75"/><rect x="16.3" y="59.7" width="0.9" height="0.9" fill="#2e3036"/><rect x="60.2" y="57.4" width="0.9" height="0.9" fill="#b5b7bc"/><rect x="39.0" y="52.7" width="1.7" height="1.7" fill="#8e9198"/><rect x="6.7" y="61.2" width="0.9" height="0.9" fill="#6b6e75"/><rect x="8.0" y="50.3" width="1.0" height="1.0" fill="#b5b7bc"/><rect x="7.9" y="61.6" width="1.8" height="1.8" fill="#8e9198"/><rect x="9.6" y="52.6" width="1.1" height="1.1" fill="#5a6170"/><rect x="53.7" y="63.2" width="1.7" height="1.7" fill="#5a6170"/><rect x="38.8" y="53.5" width="1.3" height="1.3" fill="#2e3036"/><rect x="61.2" y="58.5" width="1.3" height="1.3" fill="#d5d6da"/><rect x="54.5" y="56.8" width="1.8" height="1.8" fill="#d5d6da"/><rect x="55.1" y="37.6" width="2.0" height="2.0" fill="#6b6e75"/><rect x="60.7" y="43.2" width="1.6" height="1.6" fill="#5a6170"/><rect x="0.8" y="39.2" width="1.0" height="1.0" fill="#6b6e75"/><rect x="28.1" y="50.6" width="1.1" height="1.1" fill="#2e3036"/><rect x="27.3" y="47.5" width="1.6" height="1.6" fill="#7d8595"/><rect x="52.6" y="61.6" width="0.9" height="0.9" fill="#2e3036"/><rect x="41.7" y="43.7" width="1.6" height="1.6" fill="#b5b7bc"/><rect x="52.4" y="37.0" width="1.2" height="1.2" fill="#45484f"/><rect x="33.8" y="48.6" width="1.2" height="1.2" fill="#2e3036"/><rect x="19.9" y="54.8" width="1.0" height="1.0" fill="#45484f"/><rect x="62.3" y="62.7" width="1.0" height="1.0" fill="#b5b7bc"/><rect x="38.4" y="63.0" width="1.0" height="1.0" fill="#7d8595"/><rect x="8.5" y="44.5" width="1.5" height="1.5" fill="#5a6170"/><rect x="17.8" y="57.3" width="1.8" height="1.8" fill="#b5b7bc"/><rect x="39.6" y="52.5" width="1.1" height="1.1" fill="#5a6170"/><rect x="46.2" y="49.4" width="1.6" height="1.6" fill="#b5b7bc"/><rect x="30.5" y="45.0" width="1.3" height="1.3" fill="#8e9198"/><rect x="12.3" y="51.8" width="0.9" height="0.9" fill="#5a6170"/><rect x="22.9" y="61.0" width="1.3" height="1.3" fill="#8e9198"/><rect x="21.2" y="43.8" width="1.2" height="1.2" fill="#8e9198"/><rect x="50.2" y="40.6" width="1.6" height="1.6" fill="#45484f"/><rect x="22.6" y="55.1" width="1.8" height="1.8" fill="#5a6170"/><rect x="23.0" y="58.1" width="2.0" height="2.0" fill="#8e9198"/><rect x="44.0" y="63.1" width="1.3" height="1.3" fill="#5a6170"/><rect x="22.9" y="55.6" width="1.8" height="1.8" fill="#b5b7bc"/><rect x="33.7" y="57.4" width="1.2" height="1.2" fill="#7d8595"/><rect x="41.0" y="54.3" width="1.4" height="1.4" fill="#6b6e75"/><rect x="6.7" y="47.9" width="1.4" height="1.4" fill="#45484f"/><rect x="62.6" y="52.6" width="1.8" height="1.8" fill="#5a6170"/><rect x="18.2" y="54.0" width="1.3" height="1.3" fill="#45484f"/><rect x="29.4" y="49.3" width="1.2" height="1.2" fill="#d5d6da"/><rect x="25.4" y="52.1" width="1.6" height="1.6" fill="#5a6170"/><rect x="0.4" y="57.6" width="1.3" height="1.3" fill="#7d8595"/><rect x="19.5" y="51.6" width="1.4" height="1.4" fill="#6b6e75"/><rect x="24.5" y="42.7" width="1.3" height="1.3" fill="#d5d6da"/><rect x="54.8" y="60.3" width="1.1" height="1.1" fill="#d5d6da"/><rect x="27.7" y="62.4" width="0.9" height="0.9" fill="#2e3036"/><rect x="16.7" y="62.0" width="1.9" height="1.9" fill="#b5b7bc"/><rect x="50.3" y="51.6" width="1.5" height="1.5" fill="#5a6170"/><rect x="33.6" y="55.9" width="1.4" height="1.4" fill="#5a6170"/><rect x="2.6" y="55.6" width="1.9" height="1.9" fill="#7d8595"/><rect x="44.0" y="51.2" width="1.4" height="1.4" fill="#45484f"/><rect x="32.6" y="54.8" width="1.9" height="1.9" fill="#6b6e75"/><rect x="62.7" y="50.1" width="1.7" height="1.7" fill="#7d8595"/><rect x="58.4" y="53.0" width="1.1" height="1.1" fill="#45484f"/><rect x="20.7" y="64.4" width="1.5" height="1.5" fill="#b5b7bc"/><rect x="7.2" y="61.9" width="1.8" height="1.8" fill="#d5d6da"/><rect x="64.4" y="61.8" width="1.6" height="1.6" fill="#5a6170"/><rect x="34.1" y="59.7" width="1.5" height="1.5" fill="#8e9198"/><rect x="12.2" y="41.3" width="1.3" height="1.3" fill="#45484f"/><rect x="64.6" y="54.5" width="1.7" height="1.7" fill="#2e3036"/><rect x="0.7" y="36.1" width="1.9" height="1.9" fill="#2e3036"/><rect x="25.8" y="38.9" width="1.6" height="1.6" fill="#2e3036"/><rect x="12.8" y="50.4" width="1.9" height="1.9" fill="#b5b7bc"/><rect x="58.2" y="50.9" width="1.5" height="1.5" fill="#6b6e75"/><rect x="26.7" y="39.5" width="1.5" height="1.5" fill="#6b6e75"/><rect x="33.1" y="36.8" width="1.1" height="1.1" fill="#45484f"/><rect x="34.0" y="59.9" width="1.8" height="1.8" fill="#5a6170"/><rect x="4.0" y="36.4" width="1.1" height="1.1" fill="#d5d6da"/><rect x="15.5" y="44.0" width="1.2" height="1.2" fill="#2e3036"/><rect x="6.5" y="62.2" width="1.3" height="1.3" fill="#45484f"/><rect x="29.2" y="47.2" width="1.1" height="1.1" fill="#2e3036"/><rect x="25.7" y="58.2" width="1.4" height="1.4" fill="#2e3036"/><rect x="40.3" y="43.2" width="1.1" height="1.1" fill="#2e3036"/><rect x="38.2" y="41.0" width="1.9" height="1.9" fill="#2e3036"/><rect x="53.0" y="44.8" width="2.0" height="2.0" fill="#b5b7bc"/><rect x="32.2" y="63.5" width="1.6" height="1.6" fill="#8e9198"/><rect x="43.9" y="53.0" width="1.2" height="1.2" fill="#5a6170"/><rect x="56.9" y="50.0" width="1.0" height="1.0" fill="#8e9198"/><rect x="11.0" y="47.0" width="2.0" height="2.0" fill="#2e3036"/><rect x="18.9" y="52.3" width="1.3" height="1.3" fill="#45484f"/><rect x="56.6" y="45.7" width="2.0" height="2.0" fill="#45484f"/><rect x="27.4" y="62.5" width="1.3" height="1.3" fill="#8e9198"/><rect x="30.4" y="46.0" width="0.9" height="0.9" fill="#5a6170"/><rect x="43.2" y="45.9" width="1.2" height="1.2" fill="#6b6e75"/><rect x="8.4" y="41.7" width="1.5" height="1.5" fill="#6b6e75"/><rect x="30.4" y="59.1" width="1.1" height="1.1" fill="#8e9198"/><rect x="22.9" y="57.0" width="1.6" height="1.6" fill="#5a6170"/><rect x="37.7" y="44.6" width="1.5" height="1.5" fill="#7d8595"/><rect x="14.8" y="49.1" width="1.9" height="1.9" fill="#6b6e75"/><rect x="64.9" y="53.3" width="1.5" height="1.5" fill="#7d8595"/><rect x="23.9" y="43.1" width="1.0" height="1.0" fill="#8e9198"/><rect x="48.8" y="55.7" width="1.5" height="1.5" fill="#45484f"/><rect x="17.6" y="58.4" width="0.9" height="0.9" fill="#5a6170"/><rect x="46.7" y="40.2" width="1.3" height="1.3" fill="#2e3036"/><rect x="5.6" y="41.1" width="1.3" height="1.3" fill="#8e9198"/><rect x="43.1" y="39.2" width="1.8" height="1.8" fill="#d5d6da"/><rect x="49.3" y="41.6" width="1.0" height="1.0" fill="#b5b7bc"/><rect x="18.8" y="59.7" width="1.2" height="1.2" fill="#5a6170"/><rect x="26.2" y="62.4" width="1.9" height="1.9" fill="#6b6e75"/><rect x="11.5" y="46.6" width="1.9" height="1.9" fill="#d5d6da"/><rect x="1.6" y="56.4" width="1.2" height="1.2" fill="#7d8595"/><rect x="55.0" y="46.2" width="1.1" height="1.1" fill="#45484f"/><rect x="7.5" y="62.5" width="1.7" height="1.7" fill="#8e9198"/><rect x="2.6" y="37.2" width="1.4" height="1.4" fill="#6b6e75"/><rect x="49.2" y="40.5" width="1.5" height="1.5" fill="#2e3036"/><rect x="40.9" y="63.3" width="1.5" height="1.5" fill="#8e9198"/><rect x="46.6" y="43.4" width="1.6" height="1.6" fill="#5a6170"/><rect x="37.4" y="63.1" width="1.8" height="1.8" fill="#45484f"/><rect x="50.5" y="44.3" width="1.9" height="1.9" fill="#2e3036"/><rect x="38.0" y="56.2" width="1.6" height="1.6" fill="#8e9198"/><rect x="2.4" y="45.2" width="1.7" height="1.7" fill="#d5d6da"/><rect x="5.6" y="56.1" width="2.0" height="2.0" fill="#5a6170"/><rect x="40.0" y="42.4" width="1.3" height="1.3" fill="#45484f"/><rect x="61.7" y="48.8" width="1.7" height="1.7" fill="#d5d6da"/><rect x="48.0" y="60.1" width="1.5" height="1.5" fill="#7d8595"/><rect x="44.0" y="42.0" width="1.4" height="1.4" fill="#6b6e75"/><rect x="12.3" y="63.6" width="1.1" height="1.1" fill="#b5b7bc"/><rect x="10.6" y="58.6" width="1.5" height="1.5" fill="#8e9198"/><rect x="16.2" y="37.7" width="1.3" height="1.3" fill="#d5d6da"/><rect x="6.0" y="54.5" width="1.1" height="1.1" fill="#6b6e75"/><rect x="46.0" y="55.4" width="1.7" height="1.7" fill="#8e9198"/><rect x="0.4" y="56.1" width="1.9" height="1.9" fill="#6b6e75"/><rect x="22.8" y="44.7" width="1.5" height="1.5" fill="#6b6e75"/><rect x="15.7" y="54.3" width="1.5" height="1.5" fill="#45484f"/><rect x="49.4" y="40.9" width="1.6" height="1.6" fill="#6b6e75"/><rect x="30.0" y="58.2" width="1.0" height="1.0" fill="#8e9198"/><rect x="18.8" y="46.5" width="0.9" height="0.9" fill="#8e9198"/><rect x="58.2" y="44.8" width="1.7" height="1.7" fill="#45484f"/><rect x="29.1" y="39.3" width="1.4" height="1.4" fill="#d5d6da"/><rect x="37.0" y="44.4" width="1.0" height="1.0" fill="#45484f"/><rect x="30.5" y="64.4" width="1.0" height="1.0" fill="#7d8595"/><rect x="46.6" y="64.4" width="1.0" height="1.0" fill="#b5b7bc"/><rect x="31.8" y="48.6" width="1.8" height="1.8" fill="#8e9198"/><rect x="20.9" y="46.4" width="1.6" height="1.6" fill="#45484f"/><rect x="40.8" y="63.1" width="1.6" height="1.6" fill="#b5b7bc"/><rect x="5.1" y="57.7" width="1.8" height="1.8" fill="#2e3036"/><rect x="54.6" y="44.6" width="2.0" height="2.0" fill="#6b6e75"/><rect x="34.2" y="62.0" width="1.0" height="1.0" fill="#6b6e75"/><rect x="46.7" y="45.0" width="1.3" height="1.3" fill="#d5d6da"/><rect x="42.1" y="46.3" width="1.3" height="1.3" fill="#8e9198"/><rect x="35.8" y="46.7" width="1.2" height="1.2" fill="#b5b7bc"/><rect x="2.7" y="52.4" width="1.9" height="1.9" fill="#5a6170"/><rect x="61.4" y="50.3" width="1.7" height="1.7" fill="#7d8595"/><rect x="64.7" y="53.5" width="1.1" height="1.1" fill="#45484f"/><rect x="14.8" y="40.0" width="1.0" height="1.0" fill="#5a6170"/><rect x="2.6" y="48.7" width="1.1" height="1.1" fill="#8e9198"/><rect x="24.2" y="36.9" width="1.1" height="1.1" fill="#5a6170"/><rect x="4.7" y="37.6" width="1.9" height="1.9" fill="#5a6170"/><rect x="4.1" y="36.3" width="1.9" height="1.9" fill="#6b6e75"/><rect x="10.7" y="44.6" width="1.8" height="1.8" fill="#7d8595"/><rect x="43.9" y="52.5" width="1.0" height="1.0" fill="#7d8595"/><rect x="21.0" y="49.4" width="2.0" height="2.0" fill="#6b6e75"/><rect x="62.5" y="54.0" width="1.7" height="1.7" fill="#2e3036"/><rect x="21.6" y="55.1" width="1.9" height="1.9" fill="#5a6170"/><rect x="31.2" y="54.8" width="1.9" height="1.9" fill="#b5b7bc"/><rect x="34.5" y="54.4" width="1.1" height="1.1" fill="#8e9198"/><rect x="48.1" y="56.0" width="1.6" height="1.6" fill="#6b6e75"/><rect x="24.2" y="52.8" width="1.3" height="1.3" fill="#5a6170"/><rect x="15.6" y="48.8" width="1.0" height="1.0" fill="#b5b7bc"/><rect x="11.7" y="61.8" width="1.1" height="1.1" fill="#45484f"/><rect x="54.4" y="54.8" width="1.5" height="1.5" fill="#8e9198"/><rect x="16.4" y="50.2" width="1.1" height="1.1" fill="#7d8595"/><rect x="37.2" y="39.3" width="1.8" height="1.8" fill="#45484f"/><rect x="44.2" y="59.2" width="1.8" height="1.8" fill="#6b6e75"/><rect x="35.8" y="56.7" width="1.6" height="1.6" fill="#45484f"/><rect x="62.4" y="50.9" width="1.8" height="1.8" fill="#7d8595"/><rect x="25.5" y="41.0" width="1.5" height="1.5" fill="#8e9198"/><rect x="50.4" y="40.0" width="1.3" height="1.3" fill="#2e3036"/><rect x="3.1" y="37.2" width="1.4" height="1.4" fill="#8e9198"/><rect x="7.8" y="39.9" width="1.6" height="1.6" fill="#45484f"/><rect x="56.7" y="52.3" width="1.1" height="1.1" fill="#d5d6da"/><rect x="48.5" y="45.9" width="1.8" height="1.8" fill="#2e3036"/><rect x="8.0" y="46.8" width="1.7" height="1.7" fill="#d5d6da"/><rect x="2.8" y="53.5" width="1.3" height="1.3" fill="#45484f"/><rect x="21.3" y="53.5" width="1.9" height="1.9" fill="#2e3036"/><rect x="43.9" y="43.4" width="1.7" height="1.7" fill="#8e9198"/><rect x="1.4" y="64.7" width="1.0" height="1.0" fill="#7d8595"/><rect x="1.4" y="39.2" width="1.1" height="1.1" fill="#b5b7bc"/><rect x="36.0" y="44.4" width="1.8" height="1.8" fill="#5a6170"/><rect x="38.2" y="43.3" width="1.9" height="1.9" fill="#b5b7bc"/><rect x="0.9" y="45.9" width="1.4" height="1.4" fill="#6b6e75"/><rect x="31.5" y="36.9" width="1.0" height="1.0" fill="#2e3036"/><rect x="40.3" y="54.7" width="1.8" height="1.8" fill="#5a6170"/><rect x="62.9" y="56.1" width="1.3" height="1.3" fill="#7d8595"/><rect x="56.7" y="53.7" width="1.3" height="1.3" fill="#45484f"/><rect x="34.3" y="45.0" width="1.5" height="1.5" fill="#6b6e75"/><rect x="2.8" y="40.9" width="1.7" height="1.7" fill="#d5d6da"/><rect x="21.5" y="49.6" width="1.2" height="1.2" fill="#d5d6da"/><rect x="21.8" y="50.0" width="0.9" height="0.9" fill="#8e9198"/><rect x="29.9" y="64.6" width="1.6" height="1.6" fill="#2e3036"/><rect x="47.3" y="40.2" width="1.2" height="1.2" fill="#5a6170"/><rect x="32.5" y="43.6" width="2.0" height="2.0" fill="#6b6e75"/><rect x="2.2" y="52.3" width="1.9" height="1.9" fill="#45484f"/><rect x="50.3" y="54.4" width="1.3" height="1.3" fill="#45484f"/><rect x="18.3" y="59.1" width="1.6" height="1.6" fill="#6b6e75"/><rect x="19.8" y="58.1" width="1.5" height="1.5" fill="#d5d6da"/><rect x="41.3" y="46.2" width="1.3" height="1.3" fill="#5a6170"/><rect x="45.8" y="55.5" width="1.5" height="1.5" fill="#7d8595"/><rect x="58.1" y="59.5" width="1.1" height="1.1" fill="#d5d6da"/><rect x="13.3" y="61.8" width="1.3" height="1.3" fill="#7d8595"/><rect x="25.7" y="58.4" width="1.5" height="1.5" fill="#6b6e75"/><rect x="9.3" y="56.9" width="1.7" height="1.7" fill="#b5b7bc"/><rect x="35.8" y="63.2" width="1.0" height="1.0" fill="#d5d6da"/><rect x="12.4" y="62.8" width="1.2" height="1.2" fill="#6b6e75"/><rect x="23.0" y="49.6" width="1.7" height="1.7" fill="#5a6170"/><rect x="59.9" y="60.3" width="1.9" height="1.9" fill="#d5d6da"/><rect x="17.9" y="43.5" width="1.7" height="1.7" fill="#2e3036"/><rect x="40.7" y="42.9" width="1.1" height="1.1" fill="#2e3036"/><rect x="26.0" y="41.8" width="1.9" height="1.9" fill="#b5b7bc"/><rect x="42.1" y="41.7" width="2.0" height="2.0" fill="#2e3036"/><rect x="39.1" y="38.3" width="1.7" height="1.7" fill="#d5d6da"/><rect x="0.3" y="43.8" width="1.6" height="1.6" fill="#2e3036"/><rect x="60.0" y="42.2" width="1.9" height="1.9" fill="#d5d6da"/><rect x="1.8" y="50.1" width="1.1" height="1.1" fill="#d5d6da"/><rect x="56.1" y="59.1" width="1.6" height="1.6" fill="#45484f"/><rect x="21.7" y="50.3" width="1.2" height="1.2" fill="#5a6170"/><rect x="30.1" y="36.4" width="1.5" height="1.5" fill="#d5d6da"/><rect x="64.2" y="37.6" width="1.1" height="1.1" fill="#d5d6da"/><rect x="1.2" y="42.1" width="1.3" height="1.3" fill="#45484f"/><rect x="23.5" y="46.0" width="1.6" height="1.6" fill="#6b6e75"/><rect x="39.1" y="45.6" width="1.8" height="1.8" fill="#b5b7bc"/><rect x="31.0" y="36.9" width="1.6" height="1.6" fill="#b5b7bc"/><rect x="35.7" y="56.5" width="1.3" height="1.3" fill="#b5b7bc"/><rect x="34.4" y="43.9" width="0.9" height="0.9" fill="#b5b7bc"/><rect x="30.9" y="55.0" width="1.1" height="1.1" fill="#d5d6da"/><rect x="40.9" y="47.6" width="1.9" height="1.9" fill="#45484f"/><rect x="40.6" y="39.5" width="1.5" height="1.5" fill="#8e9198"/><rect x="11.8" y="63.3" width="1.7" height="1.7" fill="#d5d6da"/><rect x="58.7" y="61.3" width="1.5" height="1.5" fill="#6b6e75"/><rect x="22.8" y="56.6" width="2.0" height="2.0" fill="#7d8595"/><rect x="32.4" y="54.4" width="1.9" height="1.9" fill="#d5d6da"/><rect x="25.3" y="42.2" width="1.0" height="1.0" fill="#2e3036"/><rect x="47.7" y="37.9" width="1.6" height="1.6" fill="#5a6170"/><rect x="22.8" y="42.6" width="1.4" height="1.4" fill="#5a6170"/><rect x="59.7" y="63.4" width="0.9" height="0.9" fill="#8e9198"/><rect x="1.3" y="56.6" width="1.2" height="1.2" fill="#8e9198"/><rect x="13.2" y="58.0" width="1.2" height="1.2" fill="#b5b7bc"/><rect x="64.6" y="42.3" width="1.4" height="1.4" fill="#6b6e75"/><rect x="60.7" y="58.3" width="1.8" height="1.8" fill="#6b6e75"/><rect x="18.4" y="45.6" width="1.9" height="1.9" fill="#7d8595"/><rect x="16.2" y="45.3" width="1.1" height="1.1" fill="#7d8595"/><rect x="3.4" y="58.7" width="1.0" height="1.0" fill="#d5d6da"/><rect x="50.3" y="48.7" width="1.9" height="1.9" fill="#5a6170"/><rect x="64.7" y="44.6" width="1.8" height="1.8" fill="#2e3036"/><rect x="9.9" y="62.5" width="1.9" height="1.9" fill="#6b6e75"/><rect x="9.8" y="57.3" width="1.7" height="1.7" fill="#45484f"/><rect x="30.2" y="47.5" width="1.3" height="1.3" fill="#5a6170"/><rect x="59.7" y="56.8" width="2.0" height="2.0" fill="#d5d6da"/><rect x="2.1" y="42.8" width="0.9" height="0.9" fill="#2e3036"/><rect x="32.8" y="42.7" width="1.7" height="1.7" fill="#5a6170"/><rect x="47.4" y="37.4" width="1.0" height="1.0" fill="#d5d6da"/><rect x="7.2" y="63.8" width="1.5" height="1.5" fill="#6b6e75"/><rect x="0.2" y="42.5" width="1.6" height="1.6" fill="#6b6e75"/><rect x="35.5" y="64.8" width="1.8" height="1.8" fill="#d5d6da"/><rect x="62.2" y="38.2" width="1.8" height="1.8" fill="#8e9198"/><rect x="63.2" y="42.5" width="1.2" height="1.2" fill="#45484f"/><rect x="11.5" y="43.7" width="2.0" height="2.0" fill="#45484f"/><rect x="12.8" y="37.4" width="1.2" height="1.2" fill="#d5d6da"/><rect x="21.2" y="37.2" width="1.5" height="1.5" fill="#7d8595"/><rect x="35.7" y="56.0" width="1.3" height="1.3" fill="#b5b7bc"/><rect x="20.7" y="48.2" width="1.3" height="1.3" fill="#6b6e75"/><rect x="25.1" y="47.9" width="1.9" height="1.9" fill="#6b6e75"/><rect x="41.3" y="42.9" width="1.7" height="1.7" fill="#b5b7bc"/><rect x="47.4" y="64.7" width="1.6" height="1.6" fill="#8e9198"/><rect x="5.6" y="54.0" width="1.9" height="1.9" fill="#2e3036"/><rect x="3.2" y="56.1" width="1.7" height="1.7" fill="#d5d6da"/><rect x="28.8" y="55.4" width="2.0" height="2.0" fill="#7d8595"/><rect x="0.1" y="57.6" width="1.5" height="1.5" fill="#7d8595"/><rect x="38.5" y="64.8" width="1.8" height="1.8" fill="#8e9198"/><rect x="51.4" y="61.2" width="1.7" height="1.7" fill="#d5d6da"/><rect x="25.6" y="51.3" width="1.0" height="1.0" fill="#d5d6da"/><rect x="51.8" y="55.3" width="1.2" height="1.2" fill="#b5b7bc"/><rect x="54.7" y="60.9" width="1.5" height="1.5" fill="#d5d6da"/><rect x="31.0" y="42.4" width="1.0" height="1.0" fill="#6b6e75"/><rect x="49.2" y="46.6" width="1.5" height="1.5" fill="#8e9198"/><rect x="52.9" y="42.9" width="1.1" height="1.1" fill="#6b6e75"/><rect x="43.0" y="41.2" width="1.3" height="1.3" fill="#2e3036"/><rect x="23.5" y="61.0" width="1.0" height="1.0" fill="#5a6170"/><rect x="10.0" y="43.3" width="1.3" height="1.3" fill="#45484f"/><rect x="43.1" y="51.2" width="1.4" height="1.4" fill="#b5b7bc"/><rect x="5.7" y="47.5" width="1.7" height="1.7" fill="#7d8595"/><rect x="29.2" y="49.9" width="1.7" height="1.7" fill="#6b6e75"/><rect x="9.7" y="55.7" width="1.4" height="1.4" fill="#d5d6da"/><rect x="42.9" y="54.1" width="1.8" height="1.8" fill="#d5d6da"/><rect x="16.4" y="52.1" width="1.5" height="1.5" fill="#2e3036"/><rect x="3.8" y="41.2" width="1.9" height="1.9" fill="#b5b7bc"/><rect x="16.6" y="43.7" width="1.0" height="1.0" fill="#7d8595"/><rect x="41.3" y="60.9" width="1.0" height="1.0" fill="#8e9198"/><rect x="62.3" y="44.4" width="1.9" height="1.9" fill="#d5d6da"/><rect x="46.6" y="46.9" width="1.7" height="1.7" fill="#2e3036"/><rect x="19.2" y="47.8" width="1.3" height="1.3" fill="#b5b7bc"/><rect x="25.0" y="52.8" width="2.0" height="2.0" fill="#8e9198"/><rect x="55.4" y="52.8" width="1.6" height="1.6" fill="#45484f"/><rect x="21.4" y="38.1" width="1.3" height="1.3" fill="#7d8595"/><rect x="34.2" y="50.4" width="1.0" height="1.0" fill="#2e3036"/><rect x="36.6" y="63.1" width="1.4" height="1.4" fill="#5a6170"/><rect x="30.8" y="61.8" width="1.3" height="1.3" fill="#7d8595"/><rect x="8.8" y="57.8" width="1.6" height="1.6" fill="#2e3036"/><rect x="48.1" y="47.6" width="1.9" height="1.9" fill="#2e3036"/><rect x="19.1" y="45.6" width="1.7" height="1.7" fill="#5a6170"/><rect x="7.7" y="42.4" width="1.5" height="1.5" fill="#45484f"/><rect x="1.0" y="50.4" width="1.5" height="1.5" fill="#8e9198"/><rect x="3.6" y="55.7" width="1.4" height="1.4" fill="#d5d6da"/><rect x="3.6" y="56.0" width="1.8" height="1.8" fill="#5a6170"/><rect x="9.1" y="47.8" width="1.9" height="1.9" fill="#2e3036"/><rect x="9.5" y="45.7" width="1.1" height="1.1" fill="#2e3036"/><rect x="35.0" y="51.1" width="1.2" height="1.2" fill="#45484f"/><rect x="16.6" y="60.9" width="1.5" height="1.5" fill="#5a6170"/><rect x="27.3" y="37.5" width="1.2" height="1.2" fill="#b5b7bc"/><rect x="24.7" y="48.6" width="1.2" height="1.2" fill="#b5b7bc"/><rect x="8.6" y="42.0" width="1.9" height="1.9" fill="#d5d6da"/><rect x="42.7" y="56.6" width="1.3" height="1.3" fill="#6b6e75"/><rect x="52.1" y="41.8" width="1.7" height="1.7" fill="#2e3036"/><rect x="0.6" y="38.0" width="0.9" height="0.9" fill="#d5d6da"/><rect x="14.3" y="48.7" width="1.7" height="1.7" fill="#8e9198"/><rect x="52.2" y="53.2" width="1.3" height="1.3" fill="#7d8595"/><rect x="47.3" y="41.9" width="1.0" height="1.0" fill="#8e9198"/><rect x="28.2" y="54.5" width="1.1" height="1.1" fill="#2e3036"/><rect x="57.2" y="59.6" width="1.1" height="1.1" fill="#7d8595"/><rect x="60.0" y="52.3" width="1.4" height="1.4" fill="#6b6e75"/><rect x="43.8" y="55.6" width="1.8" height="1.8" fill="#b5b7bc"/><rect x="34.7" y="40.6" width="1.5" height="1.5" fill="#8e9198"/><rect x="30.3" y="41.8" width="1.9" height="1.9" fill="#45484f"/><rect x="27.0" y="55.1" width="1.7" height="1.7" fill="#b5b7bc"/><rect x="28.8" y="48.3" width="1.9" height="1.9" fill="#2e3036"/><rect x="8.7" y="40.6" width="1.2" height="1.2" fill="#7d8595"/><rect x="15.1" y="52.9" width="1.7" height="1.7" fill="#d5d6da"/><rect x="46.8" y="45.0" width="1.3" height="1.3" fill="#b5b7bc"/><rect x="54.7" y="40.4" width="1.3" height="1.3" fill="#8e9198"/><rect x="2.1" y="47.0" width="1.1" height="1.1" fill="#b5b7bc"/><rect x="35.5" y="38.7" width="1.1" height="1.1" fill="#7d8595"/><rect x="12.0" y="45.7" width="1.0" height="1.0" fill="#5a6170"/><rect x="53.9" y="39.5" width="2.0" height="2.0" fill="#8e9198"/><rect x="61.1" y="51.3" width="1.4" height="1.4" fill="#b5b7bc"/><rect x="1.2" y="58.7" width="1.1" height="1.1" fill="#45484f"/><rect x="18.2" y="44.8" width="1.1" height="1.1" fill="#45484f"/><rect x="30.6" y="58.3" width="1.5" height="1.5" fill="#8e9198"/><rect x="19.5" y="52.8" width="2.0" height="2.0" fill="#45484f"/><rect x="22.4" y="63.4" width="1.0" height="1.0" fill="#b5b7bc"/><rect x="21.7" y="49.0" width="1.3" height="1.3" fill="#8e9198"/><rect x="23.7" y="39.2" width="1.8" height="1.8" fill="#b5b7bc"/><rect x="47.0" y="49.2" width="1.8" height="1.8" fill="#45484f"/><rect x="38.7" y="49.4" width="0.9" height="0.9" fill="#2e3036"/><rect x="37.7" y="48.0" width="1.4" height="1.4" fill="#6b6e75"/><rect x="54.4" y="38.2" width="1.3" height="1.3" fill="#6b6e75"/><rect x="43.1" y="38.6" width="1.8" height="1.8" fill="#2e3036"/><rect x="56.8" y="49.9" width="1.2" height="1.2" fill="#6b6e75"/><rect x="6.9" y="42.9" width="1.4" height="1.4" fill="#6b6e75"/><rect x="34.8" y="39.4" width="1.2" height="1.2" fill="#7d8595"/><rect x="36.9" y="37.2" width="1.3" height="1.3" fill="#b5b7bc"/><rect x="12.9" y="47.7" width="2.0" height="2.0" fill="#8e9198"/><rect x="59.0" y="57.1" width="1.9" height="1.9" fill="#8e9198"/><rect x="1.0" y="63.4" width="1.8" height="1.8" fill="#7d8595"/><rect x="45.6" y="42.1" width="1.0" height="1.0" fill="#8e9198"/><rect x="11.1" y="60.4" width="1.4" height="1.4" fill="#2e3036"/><rect x="40.6" y="39.2" width="1.0" height="1.0" fill="#45484f"/><rect x="37.6" y="42.8" width="1.8" height="1.8" fill="#2e3036"/><rect x="4.7" y="45.8" width="0.9" height="0.9" fill="#45484f"/><rect x="40.2" y="56.1" width="1.3" height="1.3" fill="#b5b7bc"/><rect x="52.7" y="49.4" width="0.9" height="0.9" fill="#6b6e75"/><rect x="61.1" y="47.9" width="0.9" height="0.9" fill="#5a6170"/><rect x="51.3" y="40.3" width="1.1" height="1.1" fill="#6b6e75"/><rect x="22.4" y="40.1" width="1.9" height="1.9" fill="#8e9198"/><rect x="44.6" y="56.5" width="2.0" height="2.0" fill="#45484f"/><rect x="51.5" y="49.9" width="1.5" height="1.5" fill="#7d8595"/><rect x="21.5" y="38.0" width="1.1" height="1.1" fill="#45484f"/><rect x="40.6" y="60.5" width="1.0" height="1.0" fill="#5a6170"/><rect x="46.6" y="46.1" width="1.8" height="1.8" fill="#6b6e75"/><rect x="32.0" y="58.4" width="1.0" height="1.0" fill="#7d8595"/><rect x="53.8" y="63.2" width="1.7" height="1.7" fill="#2e3036"/><rect x="54.1" y="59.3" width="1.4" height="1.4" fill="#6b6e75"/><rect x="53.6" y="58.7" width="1.7" height="1.7" fill="#b5b7bc"/><rect x="38.6" y="55.0" width="1.0" height="1.0" fill="#45484f"/><rect x="50.9" y="59.3" width="1.2" height="1.2" fill="#8e9198"/><rect x="38.2" y="52.3" width="1.5" height="1.5" fill="#7d8595"/><rect x="60.7" y="61.8" width="1.3" height="1.3" fill="#2e3036"/><rect x="50.9" y="59.0" width="1.8" height="1.8" fill="#d5d6da"/><rect x="26.4" y="38.5" width="1.6" height="1.6" fill="#d5d6da"/><rect x="58.8" y="48.4" width="0.9" height="0.9" fill="#b5b7bc"/><rect x="31.8" y="36.5" width="1.9" height="1.9" fill="#45484f"/><rect x="30.9" y="47.9" width="1.4" height="1.4" fill="#b5b7bc"/><rect x="21.8" y="42.2" width="1.3" height="1.3" fill="#d5d6da"/><rect x="30.3" y="36.9" width="1.0" height="1.0" fill="#d5d6da"/><rect x="17.6" y="56.3" width="1.3" height="1.3" fill="#7d8595"/><rect x="35.0" y="43.0" width="1.7" height="1.7" fill="#8e9198"/><rect x="2.7" y="59.9" width="1.3" height="1.3" fill="#6b6e75"/><rect x="21.6" y="40.4" width="1.1" height="1.1" fill="#6b6e75"/><rect x="57.8" y="53.7" width="1.2" height="1.2" fill="#5a6170"/><rect x="20.7" y="61.4" width="1.8" height="1.8" fill="#8e9198"/><rect x="62.9" y="47.3" width="0.9" height="0.9" fill="#2e3036"/><rect x="11.4" y="63.4" width="1.5" height="1.5" fill="#7d8595"/><rect x="42.7" y="57.4" width="2.0" height="2.0" fill="#45484f"/><rect x="47.7" y="57.8" width="1.0" height="1.0" fill="#5a6170"/><rect x="49.0" y="43.3" width="1.0" height="1.0" fill="#5a6170"/><rect x="40.6" y="48.9" width="1.3" height="1.3" fill="#b5b7bc"/><rect x="43.0" y="54.3" width="1.9" height="1.9" fill="#5a6170"/><rect x="52.6" y="37.7" width="1.4" height="1.4" fill="#7d8595"/><rect x="45.0" y="36.5" width="1.5" height="1.5" fill="#45484f"/><rect x="29.1" y="57.8" width="1.7" height="1.7" fill="#6b6e75"/><rect x="48.7" y="37.0" width="1.4" height="1.4" fill="#d5d6da"/><rect x="0.5" y="63.2" width="1.1" height="1.1" fill="#b5b7bc"/><rect x="38.2" y="52.7" width="2.0" height="2.0" fill="#2e3036"/><rect x="11.3" y="53.1" width="1.6" height="1.6" fill="#b5b7bc"/><rect x="15.7" y="58.4" width="1.4" height="1.4" fill="#2e3036"/><rect x="63.6" y="54.8" width="1.4" height="1.4" fill="#5a6170"/><rect x="63.3" y="46.4" width="1.3" height="1.3" fill="#b5b7bc"/><rect x="54.2" y="50.4" width="1.8" height="1.8" fill="#2e3036"/></g>
</g></svg>
<div class="r" style="left:55px;top:138px;width:2646px;height:68px;background:#222222;border:2px solid #474747;border-radius:10px;box-sizing:border-box"></div>
<div class="t " style="left:69px;top:157.24px;font-size:27.6px;color:#8b8b8b;font-family:'Liberation Mono', monospace;">Enter SQL to filter...</div>
<svg class="r" style="left:2596px;top:153px;" width="40" height="40" viewBox="0 0 40 40" fill="none"><circle cx="17" cy="17" r="14" stroke="#fff" stroke-width="3.2"/><path d="M27.5 27.5 L34 34" stroke="#fff" stroke-width="3.2" stroke-linecap="round"/></svg>
<div class="r" style="left:2655.5px;top:168.5px;width:7px;height:7px;background:#fff;border-radius:50%"></div>
<div class="r" style="left:2667.5px;top:168.5px;width:7px;height:7px;background:#fff;border-radius:50%"></div>
<div class="r" style="left:2679.5px;top:168.5px;width:7px;height:7px;background:#fff;border-radius:50%"></div>
<div class="r" style="left:55px;top:214.5px;width:2646px;height:79.5px;background:#222222;border:2px solid #474747;border-radius:10px;box-sizing:border-box"></div>
<div class="r" style="left:73px;top:224px;width:96px;height:60px;background:#2b2b2b;border-radius:14px"></div>
<svg class="r" style="left:106px;top:239px;" width="30" height="30" viewBox="0 0 30 30" fill="none"><rect x="2.7" y="2.9" width="24.3" height="24.3" rx="4" stroke="#fff" stroke-width="2.4"/><path d="M11.2 2.9 V27.2" stroke="#fff" stroke-width="2.4"/></svg>
<div class="t s" style="left:207.5px;top:241.78px;font-size:25.3px;color:#fff;letter-spacing:-0.478px;">Last 14 days</div>
<svg class="r" style="left:360px;top:246px;" width="22" height="16" viewBox="0 0 22 16" fill="none"><path d="M3 4 L11 12 L19 4" stroke="#8a8a8a" stroke-width="2.6" stroke-linecap="round" stroke-linejoin="round"/></svg>
<div class="r" style="left:425px;top:224px;width:2px;height:60px;background:#4c4c4c"></div>
<div class="r" style="left:527px;top:279.5px;width:1992px;height:3.2px;background:repeating-linear-gradient(90deg,#1f5670 0 14px,transparent 14px 16.75px)"></div>
<div class="r" style="left:527px;top:282.5px;width:2007px;height:1.6px;background:#e8e8e8"></div>
<div class="r" style="left:2519px;top:234px;width:17px;height:49px;background:#1e6482"></div>
<div class="r" style="left:2528.5px;top:224.5px;width:8px;height:59px;border:1.5px dashed #22c4e8;box-sizing:border-box"></div>
<div class="r" style="left:2533.5px;top:268px;width:1.5px;height:15px;background:#e8e8e8"></div>
<div class="r" style="left:526.5px;top:267px;width:2px;height:16px;background:#e8e8e8"></div>
<div class="t s" style="left:527.5px;transform:translateX(-50%);top:249.91px;font-size:17px;color:#e6e6e6;">Sep 10, 14:10:25</div>
<div class="r" style="left:861.25px;top:267px;width:2px;height:16px;background:#e8e8e8"></div>
<div class="t s" style="left:862.25px;transform:translateX(-50%);top:249.91px;font-size:17px;color:#e6e6e6;">Thu, Sep 12</div>
<div class="r" style="left:1196.0px;top:267px;width:2px;height:16px;background:#e8e8e8"></div>
<div class="t s" style="left:1197.0px;transform:translateX(-50%);top:249.91px;font-size:17px;color:#e6e6e6;">Sun, Sep 15</div>
<div class="r" style="left:1530.75px;top:267px;width:2px;height:16px;background:#e8e8e8"></div>
<div class="t s" style="left:1531.75px;transform:translateX(-50%);top:249.91px;font-size:17px;color:#e6e6e6;">Tue, Sep 17</div>
<div class="r" style="left:1865.5px;top:267px;width:2px;height:16px;background:#e8e8e8"></div>
<div class="t s" style="left:1866.5px;transform:translateX(-50%);top:249.91px;font-size:17px;color:#e6e6e6;">Thu, Sep 19</div>
<div class="r" style="left:2200.25px;top:267px;width:2px;height:16px;background:#e8e8e8"></div>
<div class="t s" style="left:2201.25px;transform:translateX(-50%);top:249.91px;font-size:17px;color:#e6e6e6;">Sun, Sep 22</div>
<div class="r" style="left:2535.0px;top:267px;width:2px;height:16px;background:#e8e8e8"></div>
<div class="t s" style="left:2536.0px;transform:translateX(-50%);top:249.91px;font-size:17px;color:#e6e6e6;">Sep 24, 14:10:25</div>
<svg class="r" style="left:2636px;top:231px;" width="48" height="48" viewBox="0 0 48 48" fill="none"><circle cx="21" cy="21" r="16" stroke="#8f8f8f" stroke-width="3.8"/><path d="M33 33 L41 41" stroke="#8f8f8f" stroke-width="3.8" stroke-linecap="round"/><path d="M21 14.5 V27.5 M14.5 21 H27.5" stroke="#8f8f8f" stroke-width="4" stroke-linecap="round"/></svg>
<div class="r" style="left:55px;top:303px;width:1541px;height:1087px;background:#222222;border:2px solid #474747;border-radius:8px;box-sizing:border-box"></div>
<div class="r" style="left:1572px;top:386px;width:22px;height:1001px;background:#181818"></div>
<div class="r" style="left:57px;top:384px;width:1537px;height:2px;background:#474747"></div>
<div class="r" style="left:73px;top:320px;width:152px;height:48px;background:#f87171;border-radius:9px"></div>
<div class="t s" style="left:100px;top:331.81px;font-size:25.5px;color:#fff;">Stop live</div>
<div class="t s" style="left:258px;top:331.73px;font-size:25.6px;color:#fff;">Connected</div>
<div class="t s" style="left:1251px;top:331.96px;font-size:25.8px;color:#fff;">Visibility</div>
<svg class="r" style="left:1350px;top:336px;" width="22" height="16" viewBox="0 0 22 16" fill="none"><path d="M3.5 4 L11 11.5 L18.5 4" stroke="#8a8a8a" stroke-width="3" stroke-linecap="round" stroke-linejoin="round"/></svg>
<div class="t s" style="left:1402px;top:332.47px;font-size:25.2px;color:#fff;">Default levels</div>
<svg class="r" style="left:1559px;top:336px;" width="22" height="16" viewBox="0 0 22 16" fill="none"><path d="M3.5 4 L11 11.5 L18.5 4" stroke="#8a8a8a" stroke-width="3" stroke-linecap="round" stroke-linejoin="round"/></svg>
<div class="t s" style="left:569.3px;top:398.67px;font-size:25.2px;color:#8a8a8a;letter-spacing:0.137px;">No older items in the selected time window.</div>
<div class="r" style="left:766px;top:434px;width:96px;height:44px;background:#2f2f2f;border:2px solid #444;border-radius:22px;box-sizing:border-box"></div>
<div class="t s" style="left:814px;transform:translateX(-50%);top:444.35px;font-size:24.4px;color:#9a9a9a;">Today</div>
<div class="r" style="left:1608px;top:303px;width:2px;height:1087px;background:#4a4a4a"></div>
<div class="r" style="left:1597px;top:830px;width:24px;height:32px;background:#3b4659;border-radius:9px"></div>
<div class="r" style="left:1604.8px;top:838.8px;width:3.4px;height:3.4px;background:#fff;border-radius:50%"></div>
<div class="r" style="left:1610.8px;top:838.8px;width:3.4px;height:3.4px;background:#fff;border-radius:50%"></div>
<div class="r" style="left:1604.8px;top:844.3px;width:3.4px;height:3.4px;background:#fff;border-radius:50%"></div>
<div class="r" style="left:1610.8px;top:844.3px;width:3.4px;height:3.4px;background:#fff;border-radius:50%"></div>
<div class="r" style="left:1604.8px;top:849.8px;width:3.4px;height:3.4px;background:#fff;border-radius:50%"></div>
<div class="r" style="left:1610.8px;top:849.8px;width:3.4px;height:3.4px;background:#fff;border-radius:50%"></div>
<div class="r" style="left:1624px;top:305px;width:1074px;height:1082px;background:#222222;border:2px solid #474747;border-radius:8px;box-sizing:border-box"></div>
<div class="r" style="left:57px;top:494.5px;width:1515px;height:2px;background:#474747"></div>
<div class="t " style="left:74px;top:508.10px;font-size:24px;color:#8a8a8a;font-family:'Liberation Mono', monospace;letter-spacing:-0.1px;">14:10:05</div>
<div class="r" style="left:204px;top:501.0px;width:50px;height:32px;background:#325c7a;border-radius:8px"></div>
<svg class="r" style="left:211px;top:508.0px;" width="18" height="18" viewBox="0 0 18 18" fill="none"><rect x="1.2" y="1.2" width="15.6" height="15.6" rx="2" stroke="#a9c7ef" stroke-width="1.8"/><path d="M9 4.8 V13.2 M4.8 9 H13.2" stroke="#a9c7ef" stroke-width="1.8"/></svg>
<div class="t s" style="left:234px;top:505.76px;font-size:24.5px;color:#a9c7ef;">1</div>
<div class="t " style="left:271px;top:508.10px;font-size:24px;color:#fff;font-family:'Liberation Mono', monospace;letter-spacing:-0.1px;">Calling app.main.main</div>
<div class="t s" style="left:606px;top:505.34px;font-size:25px;color:#fff;font-style:italic;letter-spacing:-0.120px;">&lt;ongoing?&gt;</div>
<div class="r" style="left:868px;top:498.9px;width:128px;height:36px;background:rgba(255,255,255,0.028);border:2px solid #7b838c;border-radius:9px;box-sizing:border-box"></div>
<div class="t s" style="left:878.6px;top:508.54px;font-size:18.5px;color:#8a939c;letter-spacing:0.452px;">auto_tracing</div>
<div class="r" style="left:1012px;top:507.0px;width:397px;height:20px;border-radius:10px;overflow:hidden;background:linear-gradient(180deg,transparent 0 6px,#a0a6b1 6px 14px,transparent 14px),repeating-linear-gradient(135deg,#336080 0 21.21px,#6489a5 21.21px 42.43px)"></div>
<div class="t " style="right:1201px;top:509.46px;font-size:20.8px;color:#fff;font-family:'Liberation Mono', monospace;letter-spacing:-0.1px;">14ms</div>
<div class="r" style="left:57px;top:538.375px;width:1515px;height:2px;background:#474747"></div>
<div class="t " style="left:74px;top:551.98px;font-size:24px;color:#8a8a8a;font-family:'Liberation Mono', monospace;letter-spacing:-0.1px;">14:10:06</div>
<div class="r" style="left:204px;top:544.875px;width:50px;height:32px;background:#325c7a;border-radius:8px"></div>
<svg class="r" style="left:211px;top:551.875px;" width="18" height="18" viewBox="0 0 18 18" fill="none"><rect x="1.2" y="1.2" width="15.6" height="15.6" rx="2" stroke="#a9c7ef" stroke-width="1.8"/><path d="M9 4.8 V13.2 M4.8 9 H13.2" stroke="#a9c7ef" stroke-width="1.8"/></svg>
<div class="t s" style="left:234px;top:549.64px;font-size:24.5px;color:#a9c7ef;">1</div>
<div class="t " style="left:271px;top:551.98px;font-size:24px;color:#fff;font-family:'Liberation Mono', monospace;letter-spacing:-0.1px;">Calling app.main.main</div>
<div class="t s" style="left:606px;top:549.21px;font-size:25px;color:#fff;font-style:italic;letter-spacing:-0.120px;">&lt;ongoing?&gt;</div>
<div class="r" style="left:868px;top:542.775px;width:128px;height:36px;background:rgba(255,255,255,0.028);border:2px solid #7b838c;border-radius:9px;box-sizing:border-box"></div>
<div class="t s" style="left:878.6px;top:552.41px;font-size:18.5px;color:#8a939c;letter-spacing:0.452px;">auto_tracing</div>
<div class="r" style="left:1012px;top:550.875px;width:341px;height:20px;border-radius:10px;overflow:hidden;background:linear-gradient(180deg,transparent 0 6px,#a0a6b1 6px 14px,transparent 14px),repeating-linear-gradient(135deg,#336080 0 21.21px,#6489a5 21.21px 42.43px)"></div>
<div class="t " style="right:1201px;top:553.33px;font-size:20.8px;color:#fff;font-family:'Liberation Mono', monospace;letter-spacing:-0.1px;">10ms</div>
<div class="r" style="left:57px;top:582.25px;width:1515px;height:2px;background:#474747"></div>
<div class="t " style="left:74px;top:595.85px;font-size:24px;color:#8a8a8a;font-family:'Liberation Mono', monospace;letter-spacing:-0.1px;">14:10:16</div>
<div class="r" style="left:204.4px;top:599.1px;width:13.8px;height:13.8px;background:#3b6a8a;transform:rotate(45deg)"></div>
<div class="t " style="left:236px;top:595.85px;font-size:24px;color:#fff;font-family:'Liberation Mono', monospace;letter-spacing:-0.1px;">Calling app.server.routes.index</div>
<div class="r" style="left:868px;top:586.65px;width:128px;height:36px;background:rgba(255,255,255,0.028);border:2px solid #7b838c;border-radius:9px;box-sizing:border-box"></div>
<div class="t s" style="left:878.6px;top:596.29px;font-size:18.5px;color:#8a939c;letter-spacing:0.452px;">auto_tracing</div>
<div class="r" style="left:1012px;top:594.75px;width:153px;height:20px;border-radius:10px;background:#366282"></div>
<div class="t " style="right:1201px;top:597.21px;font-size:20.8px;color:#fff;font-family:'Liberation Mono', monospace;letter-spacing:-0.1px;">3ms</div>
<div class="r" style="left:57px;top:626.125px;width:1515px;height:44px;background:#393939"></div>
<div class="r" style="left:57px;top:626.125px;width:1515px;height:2px;background:#474747"></div>
<div class="t " style="left:74px;top:639.73px;font-size:24px;color:#8a8a8a;font-family:'Liberation Mono', monospace;letter-spacing:-0.1px;">14:11:52</div>
<div class="r" style="left:204.4px;top:642.975px;width:13.8px;height:13.8px;background:#3b6a8a;transform:rotate(45deg)"></div>
<div class="t " style="left:236px;top:639.73px;font-size:24px;color:#fff;font-family:'Liberation Mono', monospace;letter-spacing:-0.1px;">Calling app.server.routes.calculate</div>
<div class="r" style="left:868px;top:630.525px;width:128px;height:36px;background:rgba(255,255,255,0.028);border:2px solid #7b838c;border-radius:9px;box-sizing:border-box"></div>
<div class="t s" style="left:878.6px;top:640.16px;font-size:18.5px;color:#8a939c;letter-spacing:0.452px;">auto_tracing</div>
<div class="r" style="left:1012px;top:638.625px;width:448px;height:20px;border-radius:10px;background:#366282"></div>
<div class="t " style="right:1201px;top:641.08px;font-size:20.8px;color:#fff;font-family:'Liberation Mono', monospace;letter-spacing:-0.1px;">20ms</div>
<div class="r" style="left:57px;top:670.0px;width:1515px;height:2px;background:#474747"></div>
<div class="t " style="left:74px;top:683.60px;font-size:24px;color:#8a8a8a;font-family:'Liberation Mono', monospace;letter-spacing:-0.1px;">14:12:38</div>
<div class="r" style="left:204.4px;top:686.85px;width:13.8px;height:13.8px;background:#3b6a8a;transform:rotate(45deg)"></div>
<div class="t " style="left:236px;top:683.60px;font-size:24px;color:#fff;font-family:'Liberation Mono', monospace;letter-spacing:-0.1px;">Calling app.server.routes.calculate</div>
<div class="r" style="left:868px;top:674.4px;width:128px;height:36px;background:rgba(255,255,255,0.028);border:2px solid #7b838c;border-radius:9px;box-sizing:border-box"></div>
<div class="t s" style="left:878.6px;top:684.04px;font-size:18.5px;color:#8a939c;letter-spacing:0.452px;">auto_tracing</div>
<div class="r" style="left:1012px;top:682.5px;width:405px;height:20px;border-radius:10px;background:#366282"></div>
<div class="t " style="right:1201px;top:684.96px;font-size:20.8px;color:#fff;font-family:'Liberation Mono', monospace;letter-spacing:-0.1px;">15ms</div>
<div class="r" style="left:1642px;top:322px;width:48px;height:48px;background:#305a79;border-radius:8px"></div>
<svg class="r" style="left:1642px;top:322px;" width="48" height="48" viewBox="0 0 48 48" fill="none"><circle cx="24" cy="24" r="16.9" stroke="#a7c5f2" stroke-width="3"/><circle cx="24" cy="17.3" r="1.8" fill="#a7c5f2"/><path d="M24 24.2 V30.6" stroke="#a7c5f2" stroke-width="3.2" stroke-linecap="round"/></svg>
<div class="t " style="left:1707px;top:331.52px;font-size:28.8px;color:#d4d4d4;font-weight:bold;letter-spacing:-0.001px;">Span:</div>
<div class="t s" style="left:1792px;top:331.52px;font-size:28.8px;color:#d4d4d4;letter-spacing:-0.007px;">Calling app.server.routes.calculate</div>
<svg class="r" style="left:2553px;top:330px;" width="32" height="32" viewBox="0 0 32 32" fill="none"><rect x="3.9" y="3.7" width="24" height="24.5" rx="3.5" stroke="#fff" stroke-width="2.4"/><path d="M3.9 20 H27.9" stroke="#fff" stroke-width="2.4"/></svg>
<svg class="r" style="left:2598px;top:328px;" width="38" height="36" viewBox="0 0 38 36" fill="none"><path d="M15 21 C17 23 20.5 23 22.5 21 L29 14.5 C31.5 12 31.5 8 29 5.5 C26.5 3 22.5 3 20 5.5 L18.5 7" stroke="#fff" stroke-width="2.8" stroke-linecap="round"/><path d="M22 14.5 C20 12.5 16.5 12.5 14.5 14.5 L8 21 C5.5 23.5 5.5 27.5 8 30 C10.5 32.5 14.5 32.5 17 30 L18.5 28.5" stroke="#fff" stroke-width="2.8" stroke-linecap="round"/></svg>
<svg class="r" style="left:2652px;top:333px;" width="26" height="26" viewBox="0 0 26 26" fill="none"><path d="M4.6 4.8 L21.2 21.4 M21.2 4.8 L4.6 21.4" stroke="#d8d8d8" stroke-width="2.8"/></svg>
<div class="r" style="left:1642px;top:402.3px;width:388.70000000000005px;height:43.2px;background:#354258;border-radius:12px;overflow:hidden"></div>
<div class="r" style="left:1642px;top:402.3px;width:174px;height:43.2px;background:#2f3d52;border-radius:12px 0 0 12px"></div>
<div class="t s" style="left:1652px;top:412.59px;font-size:24.7px;color:#d4d4d4;font-style:italic;letter-spacing:-0.074px;">Service Name</div>
<div class="t s" style="left:1825.4px;top:412.59px;font-size:24.7px;color:#d9d9d9;letter-spacing:0.297px;">unknown_service</div>
<div class="r" style="left:1642px;top:454.3px;width:636.8000000000002px;height:43.2px;background:#354258;border-radius:12px;overflow:hidden"></div>
<div class="r" style="left:1642px;top:454.3px;width:111px;height:43.2px;background:#2f3d52;border-radius:12px 0 0 12px"></div>
<div class="t s" style="left:1652px;top:464.59px;font-size:24.7px;color:#d4d4d4;font-style:italic;letter-spacing:-0.481px;">Trace ID</div>
<svg class="r" style="left:1761.5px;top:467.8px;" width="32" height="18" viewBox="0 0 32 18" fill="none"><path d="M11 2.5 H9 C5.4 2.5 2.5 5.4 2.5 9 C2.5 12.6 5.4 15.5 9 15.5 H11 M21 2.5 H23 C26.6 2.5 29.5 5.4 29.5 9 C29.5 12.6 26.6 15.5 23 15.5 H21 M10 9 H22" stroke="#d6d6d6" stroke-width="2.8" stroke-linecap="round"/></svg>
<div class="t s" style="left:1801.9px;top:464.59px;font-size:24.7px;color:#d9d9d9;letter-spacing:0.790px;">#df01acad0311189c8b66a466d969654b</div>
<div class="r" style="left:1642px;top:506.3px;width:394.5999999999999px;height:43.2px;background:#354258;border-radius:12px;overflow:hidden"></div>
<div class="r" style="left:1642px;top:506.3px;width:105px;height:43.2px;background:#2f3d52;border-radius:12px 0 0 12px"></div>
<div class="t s" style="left:1652px;top:516.59px;font-size:24.7px;color:#d4d4d4;font-style:italic;letter-spacing:-0.658px;">Span ID</div>
<svg class="r" style="left:1755.5px;top:519.8px;" width="32" height="18" viewBox="0 0 32 18" fill="none"><path d="M11 2.5 H9 C5.4 2.5 2.5 5.4 2.5 9 C2.5 12.6 5.4 15.5 9 15.5 H11 M21 2.5 H23 C26.6 2.5 29.5 5.4 29.5 9 C29.5 12.6 26.6 15.5 23 15.5 H21 M10 9 H22" stroke="#d6d6d6" stroke-width="2.8" stroke-linecap="round"/></svg>
<div class="t s" style="left:1795.9px;top:516.59px;font-size:24.7px;color:#d9d9d9;letter-spacing:0.700px;">#f7c8e294f7489b19</div>
<div class="r" style="left:2045.2px;top:506.3px;width:229.70000000000005px;height:43.2px;background:#354258;border-radius:12px;overflow:hidden"></div>
<div class="r" style="left:2045.2px;top:506.3px;width:70.29999999999995px;height:43.2px;background:#2f3d52;border-radius:12px 0 0 12px"></div>
<div class="t s" style="left:2055.2px;top:516.59px;font-size:24.7px;color:#d4d4d4;font-style:italic;letter-spacing:-0.291px;">Date</div>
<div class="t s" style="left:2125px;top:516.59px;font-size:24.7px;color:#d9d9d9;letter-spacing:1.384px;">2024-09-24</div>
<div class="r" style="left:1642px;top:558.2px;width:476.5999999999999px;height:43.2px;background:#354258;border-radius:12px;overflow:hidden"></div>
<div class="r" style="left:1642px;top:558.2px;width:134px;height:43.2px;background:#2f3d52;border-radius:12px 0 0 12px"></div>
<div class="t s" style="left:1652px;top:568.49px;font-size:24.7px;color:#d4d4d4;font-style:italic;letter-spacing:-0.449px;">Time span</div>
<div class="t s" style="left:1785px;top:568.49px;font-size:24.7px;color:#d9d9d9;letter-spacing:0.144px;">14:11:52.366 to 14:11:52.386</div>
<div class="r" style="left:2127.2px;top:558.2px;width:195.5px;height:43.2px;background:#354258;border-radius:12px;overflow:hidden"></div>
<div class="r" style="left:2127.2px;top:558.2px;width:114.40000000000009px;height:43.2px;background:#2f3d52;border-radius:12px 0 0 12px"></div>
<div class="t s" style="left:2137.2px;top:568.49px;font-size:24.7px;color:#d4d4d4;font-style:italic;letter-spacing:0.191px;">Duration</div>
<div class="t s" style="left:2251.5px;top:568.49px;font-size:24.7px;color:#d9d9d9;letter-spacing:0.033px;">20ms</div>
<div class="r" style="left:1642px;top:634px;width:1023px;height:47px;background:#282828"></div>
<div class="r" style="left:1642px;top:680px;width:1023px;height:2px;background:#474747"></div>
<div class="r" style="left:1642px;top:679px;width:109px;height:3px;background:#6b84a3"></div>
<div class="t s" style="left:1657.5px;top:644.85px;font-size:25.1px;color:#d4d4d4;letter-spacing:-0.204px;">Details</div>
<div class="t s" style="left:1767.2px;top:644.85px;font-size:25.1px;color:#d4d4d4;letter-spacing:-0.929px;">Raw Data</div>
<div class="t " style="left:1646.6px;top:720.40px;font-size:36.5px;color:#fff;font-weight:bold;letter-spacing:-0.481px;">Code Details</div>
<div class="t s" style="left:1648.8px;top:774.10px;font-size:28px;color:#c8c8c8;letter-spacing:0.161px;">Code Filepath:</div>
<div class="t s" style="left:1902.2px;top:773.67px;font-size:28.5px;color:#fff;letter-spacing:0.242px;">app/server/routes.py</div>
<div class="t s" style="left:1648.8px;top:817.90px;font-size:28px;color:#c8c8c8;letter-spacing:0.285px;">Code Function:</div>
<div class="t s" style="left:1902.2px;top:817.47px;font-size:28.5px;color:#fff;letter-spacing:0.165px;">calculate</div>
<div class="t s" style="left:1648.8px;top:861.70px;font-size:28px;color:#c8c8c8;letter-spacing:0.047px;">Code Lineno:</div>
<div class="t s" style="left:1902.2px;top:861.27px;font-size:28.5px;color:#fff;letter-spacing:-3.901px;">12</div>
<svg class="r" style="left:1652px;top:952.5px;" width="36" height="28" viewBox="0 0 36 28" fill="none"><path d="M5.5 7.5 L18 20 L30.5 7.5" stroke="#fff" stroke-width="4" stroke-linecap="round" stroke-linejoin="round"/></svg>
<div class="t " style="left:1693.5px;top:948.60px;font-size:36.5px;color:#fff;font-weight:bold;letter-spacing:-0.029px;">Attributes</div>
<div class="r" style="left:1646px;top:1002px;width:1015px;height:2px;background:#3a4759"></div>
<svg class="r" style="left:1650.5px;top:1029.4px;" width="14" height="12" viewBox="0 0 14 12" fill="none"><path d="M2.5 3.5 L7 8 L11.5 3.5" stroke="#9a9a9a" stroke-width="1.8" stroke-linecap="round" stroke-linejoin="round"/></svg>
<div class="t " style="left:1668px;top:1025.75px;font-size:22.5px;color:#d4d4d4;font-family:'Liberation Mono', monospace;">{</div>
<div class="t " style="left:1697px;top:1025.75px;font-size:22.5px;color:#7a7a7a;font-family:'Liberation Mono', monospace;font-style:italic;">4 items</div>
<div class="r" style="left:1658px;top:1056px;width:2px;height:172px;background:#343840"></div>
<div class="t " style="left:1689px;top:1066.75px;font-size:22.5px;color:#d4d4d4;font-family:'Liberation Mono', monospace;letter-spacing:0.1px;"><span style="color:#9cdcfe">"code.filepath"</span><span style="color:#d4d4d4">: </span><span style="color:#ce9178">"app/server/routes.py"</span><span style="color:#9cdcfe">,</span></div>
<div class="t " style="left:1689px;top:1110.05px;font-size:22.5px;color:#d4d4d4;font-family:'Liberation Mono', monospace;letter-spacing:0.1px;"><span style="color:#9cdcfe">"code.lineno"</span><span style="color:#d4d4d4">: </span><span style="color:#b5cea8">12</span><span style="color:#9cdcfe">,</span></div>
<div class="t " style="left:1689px;top:1153.35px;font-size:22.5px;color:#d4d4d4;font-family:'Liberation Mono', monospace;letter-spacing:0.1px;"><span style="color:#9cdcfe">"code.function"</span><span style="color:#d4d4d4">: </span><span style="color:#ce9178">"calculate"</span><span style="color:#9cdcfe">,</span></div>
<div class="t " style="left:1689px;top:1196.65px;font-size:22.5px;color:#d4d4d4;font-family:'Liberation Mono', monospace;letter-spacing:0.1px;"><span style="color:#9cdcfe">"logfire.msg_template"</span><span style="color:#d4d4d4">: </span><span style="color:#ce9178">"Calling app.server.routes.calculate"</span><span style="color:#9cdcfe">,</span></div>
<div class="t " style="left:1655px;top:1234.75px;font-size:22.5px;color:#d4d4d4;font-family:'Liberation Mono', monospace;">}</div>
</body></html>
